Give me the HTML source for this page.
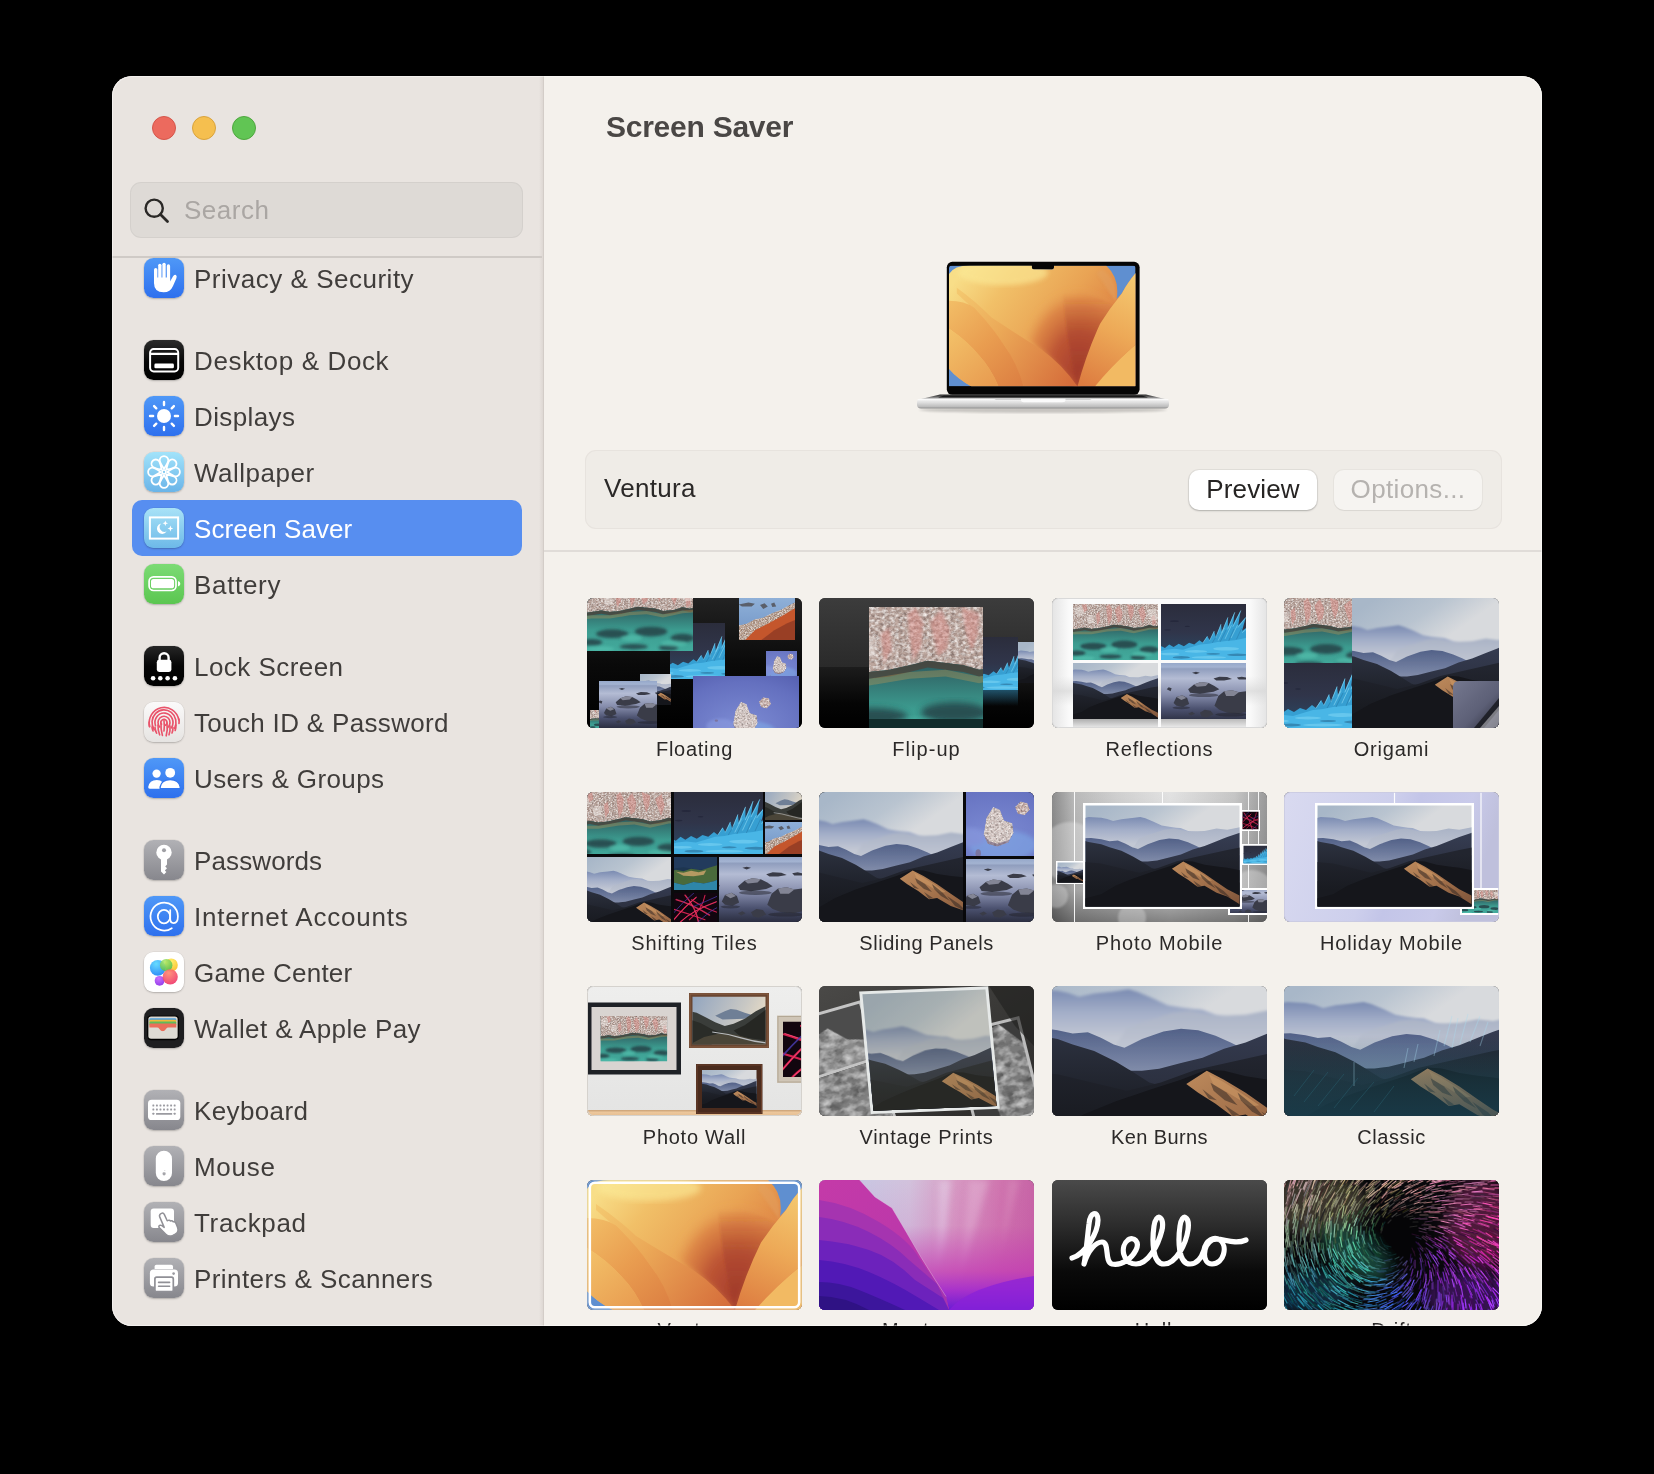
<!DOCTYPE html>
<html>
<head>
<meta charset="utf-8">
<title>Screen Saver</title>
<style>
html,body{margin:0;padding:0;background:#000;}
body{width:1654px;height:1474px;position:relative;overflow:hidden;font-family:"Liberation Sans",sans-serif;-webkit-font-smoothing:antialiased;}
#win{will-change:transform;position:absolute;left:112px;top:76px;width:1430px;height:1250px;border-radius:20px;overflow:hidden;background:#f4f1ec;}
#win:after{content:"";position:absolute;left:0;top:0;right:0;bottom:0;border-radius:20px;box-shadow:inset 0 0 0 1px rgba(255,255,255,.45);pointer-events:none;z-index:50;}
#side{position:absolute;left:0;top:0;width:431px;height:1250px;background:#e9e4e0;}
#vdiv{position:absolute;left:427px;top:0;width:5px;height:1250px;background:linear-gradient(90deg,rgba(210,204,199,0) 0,rgba(210,204,199,.45) 70%,#d3cdc8 80%,#d3cdc8 100%);}
.tl{position:absolute;top:40px;width:24px;height:24px;border-radius:50%;box-sizing:border-box;}
#search{position:absolute;left:18px;top:106px;width:393px;height:56px;border-radius:11px;background:#dedad6;box-shadow:inset 0 0 0 1px rgba(0,0,0,.045);}
#search span{position:absolute;left:54px;top:13px;font-size:26px;line-height:30px;color:#aaa6a3;letter-spacing:.5px;}
#hrule{position:absolute;left:0;top:180px;width:430px;height:2px;background:#cfcac6;}
.row{position:absolute;left:20px;width:390px;height:56px;border-radius:10px;}
.row.sel{background:#578ef0;}
.row .ic{position:absolute;left:12px;top:8px;width:40px;height:40px;border-radius:9.5px;overflow:hidden;box-shadow:0 1px 2px rgba(0,0,0,.22),0 0 0 .5px rgba(0,0,0,.06);}
.row .ic svg{position:absolute;left:0;top:0;width:40px;height:40px;display:block;}
.row .lb{position:absolute;left:62px;top:13px;font-size:26px;line-height:32px;color:#403d3b;white-space:nowrap;letter-spacing:.35px;}
.row.sel .lb{color:#fff;}
#main{position:absolute;left:432px;top:0;width:998px;height:1250px;background:#f4f1ec;}
#title{position:absolute;left:62px;top:33px;font-size:30px;line-height:36px;letter-spacing:-.25px;font-weight:bold;color:#4a4745;white-space:nowrap;}
#panel{position:absolute;left:41px;top:374px;width:917px;height:79px;border-radius:11px;background:#efece7;box-shadow:inset 0 0 0 1px #e7e3de;}
#panel .nm{position:absolute;left:19px;top:22px;font-size:26px;line-height:32px;color:#2b2928;letter-spacing:.3px;}
.btn{position:absolute;top:19.5px;height:40.5px;border-radius:10px;font-size:26px;line-height:39px;text-align:center;white-space:nowrap;}
#b1{left:604px;letter-spacing:.15px;width:128px;background:#fff;color:#262423;box-shadow:0 1px 2px rgba(0,0,0,.22),0 0 0 1px rgba(0,0,0,.05);}
#b2{left:749px;letter-spacing:.35px;width:148px;background:#f6f4f1;color:#b5b2af;box-shadow:0 1px 1px rgba(0,0,0,.06),0 0 0 1px rgba(0,0,0,.03);}
#sep{position:absolute;left:0;top:474px;width:998px;height:2px;background:#e0dcd8;}
.th{position:absolute;width:215px;height:130px;border-radius:6px;overflow:hidden;background:#333;}
.th svg{position:absolute;left:0;top:0;display:block;}
.cap{position:absolute;width:215px;text-align:center;font-size:20px;line-height:24px;color:#2b2928;white-space:nowrap;letter-spacing:.55px;}
</style>
</head>
<body>
<div id="win">
<div id="side">
<div class="tl" style="left:40px;background:#ec6a5e;border:1px solid #d5564b;"></div>
<div class="tl" style="left:80px;background:#f5bf4f;border:1px solid #d9a33d;"></div>
<div class="tl" style="left:120px;background:#61c554;border:1px solid #4fa73f;"></div>
<div id="search"><svg style="position:absolute;left:12px;top:14px" width="30" height="30" viewBox="0 0 30 30"><circle cx="12.2" cy="12.2" r="8.6" fill="none" stroke="#2a2826" stroke-width="2.4"/><path d="M18.5 18.5 L25.5 25.5" stroke="#2a2826" stroke-width="2.8" stroke-linecap="round"/></svg><span>Search</span></div>
<div id="hrule"></div>
<div class="row" style="top:174px"><div class="ic"><svg viewBox="0 0 40 40"><defs><linearGradient id="ib1" x1="0" y1="0" x2="0" y2="1"><stop offset="0" stop-color="#4f98f7"/><stop offset="1" stop-color="#2e70ee"/></linearGradient></defs><rect width="40" height="40" fill="url(#ib1)"/><g fill="#fff"><rect x="10" y="10" width="3.4" height="16" rx="1.7"/><rect x="14.2" y="5.7" width="3.3" height="18" rx="1.65"/><rect x="18.4" y="4.7" width="3.3" height="18" rx="1.65"/><rect x="22.8" y="6.3" width="3.3" height="18" rx="1.65"/><path d="M10 19.5 H26.1 V23.6 L28.9 18.4 Q30.4 16 32 17.1 Q33.3 18.2 32.3 20.4 L29 28 Q26.4 34.3 19.6 34.3 Q10 34.3 10 25Z"/></g></svg></div><div class="lb" style="letter-spacing:0.51px">Privacy &amp; Security</div></div>
<div class="row" style="top:256px"><div class="ic"><svg viewBox="0 0 40 40"><defs><linearGradient id="ib2" x1="0" y1="0" x2="0" y2="1"><stop offset="0" stop-color="#2c2c2c"/><stop offset=".55" stop-color="#060606"/><stop offset="1" stop-color="#000"/></linearGradient></defs><rect width="40" height="40" fill="url(#ib2)"/><rect x="6.1" y="9.1" width="28.1" height="22.3" rx="3.6" fill="none" stroke="#fff" stroke-width="2"/><path d="M6.1 13.9 H34.2" stroke="#fff" stroke-width="2.1"/><rect x="10.4" y="23.6" width="19.5" height="4.7" rx="1.3" fill="#fff"/></svg></div><div class="lb" style="letter-spacing:0.63px">Desktop &amp; Dock</div></div>
<div class="row" style="top:312px"><div class="ic"><svg viewBox="0 0 40 40"><defs><linearGradient id="ib3" x1="0" y1="0" x2="0" y2="1"><stop offset="0" stop-color="#4f98f7"/><stop offset="1" stop-color="#2e70ee"/></linearGradient></defs><rect width="40" height="40" fill="url(#ib3)"/><g fill="#fff"><circle cx="20" cy="20" r="7"/><rect x="18.8" y="4.8" width="2.4" height="5.5" rx="1.2" transform="rotate(0 20 20)"/><rect x="18.8" y="4.8" width="2.4" height="5.5" rx="1.2" transform="rotate(45 20 20)"/><rect x="18.8" y="4.8" width="2.4" height="5.5" rx="1.2" transform="rotate(90 20 20)"/><rect x="18.8" y="4.8" width="2.4" height="5.5" rx="1.2" transform="rotate(135 20 20)"/><rect x="18.8" y="4.8" width="2.4" height="5.5" rx="1.2" transform="rotate(180 20 20)"/><rect x="18.8" y="4.8" width="2.4" height="5.5" rx="1.2" transform="rotate(225 20 20)"/><rect x="18.8" y="4.8" width="2.4" height="5.5" rx="1.2" transform="rotate(270 20 20)"/><rect x="18.8" y="4.8" width="2.4" height="5.5" rx="1.2" transform="rotate(315 20 20)"/></g></svg></div><div class="lb" style="letter-spacing:0.38px">Displays</div></div>
<div class="row" style="top:368px"><div class="ic"><svg viewBox="0 0 40 40"><defs><linearGradient id="ib4" x1="0" y1="0" x2="0" y2="1"><stop offset="0" stop-color="#a2e3fa"/><stop offset="1" stop-color="#6ab4e8"/></linearGradient></defs><rect width="40" height="40" fill="url(#ib4)"/><g fill="none" stroke="#fff" stroke-width="1.8" stroke-linejoin="round"><path d="M20 16.8 C17 12.2 15.7 9.8 15.7 8.4 A4.3 4.3 0 1 1 24.3 8.4 C24.3 9.8 23 12.2 20 16.8Z" transform="rotate(0 20 20)"/><path d="M20 16.8 C17 12.2 15.7 9.8 15.7 8.4 A4.3 4.3 0 1 1 24.3 8.4 C24.3 9.8 23 12.2 20 16.8Z" transform="rotate(45 20 20)"/><path d="M20 16.8 C17 12.2 15.7 9.8 15.7 8.4 A4.3 4.3 0 1 1 24.3 8.4 C24.3 9.8 23 12.2 20 16.8Z" transform="rotate(90 20 20)"/><path d="M20 16.8 C17 12.2 15.7 9.8 15.7 8.4 A4.3 4.3 0 1 1 24.3 8.4 C24.3 9.8 23 12.2 20 16.8Z" transform="rotate(135 20 20)"/><path d="M20 16.8 C17 12.2 15.7 9.8 15.7 8.4 A4.3 4.3 0 1 1 24.3 8.4 C24.3 9.8 23 12.2 20 16.8Z" transform="rotate(180 20 20)"/><path d="M20 16.8 C17 12.2 15.7 9.8 15.7 8.4 A4.3 4.3 0 1 1 24.3 8.4 C24.3 9.8 23 12.2 20 16.8Z" transform="rotate(225 20 20)"/><path d="M20 16.8 C17 12.2 15.7 9.8 15.7 8.4 A4.3 4.3 0 1 1 24.3 8.4 C24.3 9.8 23 12.2 20 16.8Z" transform="rotate(270 20 20)"/><path d="M20 16.8 C17 12.2 15.7 9.8 15.7 8.4 A4.3 4.3 0 1 1 24.3 8.4 C24.3 9.8 23 12.2 20 16.8Z" transform="rotate(315 20 20)"/></g><circle cx="20" cy="20" r="1.9" fill="none" stroke="#fff" stroke-width="1.5"/></svg></div><div class="lb" style="letter-spacing:0.50px">Wallpaper</div></div>
<div class="row sel" style="top:424px"><div class="ic"><svg viewBox="0 0 40 40"><defs><linearGradient id="ib5" x1="0" y1="0" x2="0" y2="1"><stop offset="0" stop-color="#a8e2f7"/><stop offset="1" stop-color="#6db9e8"/></linearGradient></defs><rect width="40" height="40" fill="url(#ib5)"/><rect x="5.9" y="9.4" width="28.2" height="21.2" fill="none" stroke="#fff" stroke-width="2"/><path d="M17.2 15.4 A5.3 5.3 0 1 0 22.6 23.6 A5 5 0 0 1 17.2 15.4Z" fill="#fff"/><path d="M21.3 12.6 l.75 2 2 .75 -2 .75 -.75 2 -.75 -2 -2 -.75 2 -.75Z M26.4 17.6 l.8 2.1 2.1 .8 -2.1 .8 -.8 2.1 -.8 -2.1 -2.1 -.8 2.1 -.8Z" fill="#fff"/></svg></div><div class="lb" style="letter-spacing:0.06px">Screen Saver</div></div>
<div class="row" style="top:480px"><div class="ic"><svg viewBox="0 0 40 40"><defs><linearGradient id="ib6" x1="0" y1="0" x2="0" y2="1"><stop offset="0" stop-color="#7cdb75"/><stop offset="1" stop-color="#5bc650"/></linearGradient></defs><rect width="40" height="40" fill="url(#ib6)"/><rect x="5.1" y="12.9" width="26.9" height="13.6" rx="4.4" fill="none" stroke="#fff" stroke-width="1.7"/><rect x="7" y="15.1" width="23.1" height="9.2" rx="2.6" fill="#fff"/><path d="M34 16.9 Q36.3 17.6 36.3 19.7 Q36.3 21.8 34 22.5Z" fill="#fff"/></svg></div><div class="lb" style="letter-spacing:0.68px">Battery</div></div>
<div class="row" style="top:562px"><div class="ic"><svg viewBox="0 0 40 40"><defs><linearGradient id="ib7" x1="0" y1="0" x2="0" y2="1"><stop offset="0" stop-color="#262626"/><stop offset=".5" stop-color="#050505"/><stop offset="1" stop-color="#000"/></linearGradient></defs><rect width="40" height="40" fill="url(#ib7)"/><path d="M15.6 15.5 V11.7 A4.5 4.5 0 0 1 24.6 11.7 V15.5" fill="none" stroke="#fff" stroke-width="2.4"/><rect x="12.8" y="13.8" width="14.6" height="12.2" rx="2.4" fill="#fff"/><g fill="#fff"><circle cx="9.1" cy="32.2" r="2.3"/><circle cx="16.3" cy="32.2" r="2.3"/><circle cx="23.6" cy="32.2" r="2.3"/><circle cx="30.9" cy="32.2" r="2.3"/></g></svg></div><div class="lb" style="letter-spacing:0.45px">Lock Screen</div></div>
<div class="row" style="top:618px"><div class="ic"><svg viewBox="0 0 40 40"><defs><linearGradient id="ib8" x1="0" y1="0" x2="0" y2="1"><stop offset="0" stop-color="#fbfafa"/><stop offset="1" stop-color="#e6e4e2"/></linearGradient></defs><rect width="40" height="40" fill="url(#ib8)"/><g fill="none" stroke="#e9536a" stroke-width="1.65" stroke-linecap="round"><path d="M17.5 22.3 A3 3.2 0 1 1 21.5 23.2"/><path d="M15.8 25.0 A6 6.3 0 1 1 23.9 25.3"/><path d="M11.5 23.7 A9 9.5 0 1 1 27.4 25.9"/><path d="M10.2 27.7 A12 12.6 0 1 1 30.6 26.4"/><path d="M5.5 24.6 A15 15.8 0 1 1 34.8 17.8"/><path d="M20 18.5 Q20.6 24 20 29"/><path d="M17 21.5 Q16.6 27 18.4 33.4"/><path d="M23 21.6 Q23.8 28 22.2 33.8"/><path d="M14 23 Q13.8 28.6 15.6 32.8"/><path d="M26 24 Q26.4 29.4 25 32.8"/><path d="M11 25.4 Q11.2 28.6 12.6 31.2"/><path d="M29 25.6 Q29 28.8 28 31"/><path d="M8 25 Q8.2 27.4 9 29"/><path d="M32 23 Q32 26 31.2 28.4"/><path d="M5.2 20 Q5 22.6 5.6 24.4"/><path d="M34.9 17 Q35.4 19.4 35 21.4"/></g></svg></div><div class="lb" style="letter-spacing:0.33px">Touch ID &amp; Password</div></div>
<div class="row" style="top:674px"><div class="ic"><svg viewBox="0 0 40 40"><defs><linearGradient id="ib9" x1="0" y1="0" x2="0" y2="1"><stop offset="0" stop-color="#4f98f7"/><stop offset="1" stop-color="#2e70ee"/></linearGradient></defs><rect width="40" height="40" fill="url(#ib9)"/><g fill="#fff"><circle cx="12.6" cy="15.6" r="4.15"/><path d="M4.2 29 Q5.4 22 12.8 22 Q16.6 22 18.6 24.2 Q16.2 26.6 15.6 30.7 H5.8 Q4 30.7 4.2 29Z"/><circle cx="26.2" cy="14.8" r="4.9"/><path d="M16.1 29 Q17.6 21.7 26.2 21.7 Q34.8 21.7 36.3 29 Q36.5 30.7 34.8 30.7 H17.6 Q15.9 30.7 16.1 29Z" stroke="#3377ef" stroke-width="1.3"/></g></svg></div><div class="lb" style="letter-spacing:0.39px">Users &amp; Groups</div></div>
<div class="row" style="top:756px"><div class="ic"><svg viewBox="0 0 40 40"><defs><linearGradient id="ib10" x1="0" y1="0" x2="0" y2="1"><stop offset="0" stop-color="#b1b1b5"/><stop offset="1" stop-color="#87878d"/></linearGradient></defs><rect width="40" height="40" fill="url(#ib10)"/><g fill="#fff"><circle cx="20" cy="12.4" r="7.7"/><path d="M17 18 H23 V24.6 L21.2 26.4 L23 28.2 L20.8 30.4 L22.4 32 L20 34.6 L17 31.6Z"/></g><circle cx="20" cy="10.2" r="2" fill="#a0a0a5"/></svg></div><div class="lb" style="letter-spacing:0.12px">Passwords</div></div>
<div class="row" style="top:812px"><div class="ic"><svg viewBox="0 0 40 40"><defs><linearGradient id="ib11" x1="0" y1="0" x2="0" y2="1"><stop offset="0" stop-color="#4f98f7"/><stop offset="1" stop-color="#2e70ee"/></linearGradient></defs><rect width="40" height="40" fill="url(#ib11)"/><g fill="none" stroke="#fff" stroke-width="1.75" stroke-linecap="round"><ellipse cx="20" cy="20.6" rx="6.2" ry="6.8"/><path d="M27.8 32.2 A13.7 14 0 1 1 33.9 20.2 C33.9 24.8 31.8 27 29.6 27 C27.4 27 26.2 25.4 26.2 23 V14"/></g></svg></div><div class="lb" style="letter-spacing:0.81px">Internet Accounts</div></div>
<div class="row" style="top:868px"><div class="ic"><svg viewBox="0 0 40 40"><rect width="40" height="40" fill="#fff"/><defs><radialGradient id="gc1" cx=".4" cy=".25" r=".85"><stop offset="0" stop-color="#66dcff"/><stop offset="1" stop-color="#2a86f6"/></radialGradient><radialGradient id="gc2" cx=".4" cy=".25" r=".85"><stop offset="0" stop-color="#ff8a70"/><stop offset="1" stop-color="#ee2f6a"/></radialGradient><radialGradient id="gc3" cx=".5" cy=".25" r=".85"><stop offset="0" stop-color="#fff06a"/><stop offset="1" stop-color="#f9b82a"/></radialGradient><radialGradient id="gc4" cx=".4" cy=".25" r=".85"><stop offset="0" stop-color="#b4ea6a"/><stop offset="1" stop-color="#46b84e"/></radialGradient><radialGradient id="gc5" cx=".4" cy=".25" r=".85"><stop offset="0" stop-color="#c86afc"/><stop offset="1" stop-color="#8a2ee8"/></radialGradient></defs><circle cx="27.2" cy="13" r="6.6" fill="url(#gc3)"/><circle cx="13.8" cy="15.8" r="7.9" fill="url(#gc1)"/><circle cx="22.2" cy="13.2" r="6.2" fill="url(#gc4)" opacity=".9"/><circle cx="15.6" cy="28.8" r="4.9" fill="url(#gc5)" opacity=".95"/><circle cx="26.2" cy="24.8" r="7.6" fill="url(#gc2)" opacity=".92"/></svg></div><div class="lb" style="letter-spacing:0.21px">Game Center</div></div>
<div class="row" style="top:924px"><div class="ic"><svg viewBox="0 0 40 40"><rect width="40" height="40" fill="#1e1e20"/><rect x="3.7" y="7.8" width="30.6" height="23.7" rx="3.4" fill="#dcd9d2"/><rect x="5.4" y="10.2" width="26.9" height="4" rx="1.4" fill="#4a9ee0"/><rect x="5.4" y="11.8" width="26.9" height="4" rx="1.2" fill="#f0b93a"/><rect x="5.4" y="13.6" width="26.9" height="4" rx="1.2" fill="#5fbb5a"/><rect x="5.4" y="15.5" width="26.9" height="8" rx="1.2" fill="#ea6e5a"/><path d="M3.7 19.6 H13 Q14.6 19.6 15.4 21 Q17 23.2 18.7 23.2 Q20.4 23.2 22 21 Q22.8 19.6 24.4 19.6 H34.3 V28.1 Q34.3 31.5 30.9 31.5 H7.1 Q3.7 31.5 3.7 28.1Z" fill="#dedbd4"/><rect x="3.7" y="7.8" width="30.6" height="23.7" rx="3.4" fill="none" stroke="#000" stroke-width="1.3"/></svg></div><div class="lb" style="letter-spacing:0.38px">Wallet &amp; Apple Pay</div></div>
<div class="row" style="top:1006px"><div class="ic"><svg viewBox="0 0 40 40"><defs><linearGradient id="ib14" x1="0" y1="0" x2="0" y2="1"><stop offset="0" stop-color="#b1b1b5"/><stop offset="1" stop-color="#87878d"/></linearGradient></defs><rect width="40" height="40" fill="url(#ib14)"/><rect x="4" y="9.8" width="32.3" height="20.2" rx="3.6" fill="#fff"/><rect x="8.40" y="14.6" width="1.9" height="1.9" rx=".4" fill="#9a9aa0"/><rect x="11.95" y="14.6" width="1.9" height="1.9" rx=".4" fill="#9a9aa0"/><rect x="15.50" y="14.6" width="1.9" height="1.9" rx=".4" fill="#9a9aa0"/><rect x="19.05" y="14.6" width="1.9" height="1.9" rx=".4" fill="#9a9aa0"/><rect x="22.60" y="14.6" width="1.9" height="1.9" rx=".4" fill="#9a9aa0"/><rect x="26.15" y="14.6" width="1.9" height="1.9" rx=".4" fill="#9a9aa0"/><rect x="29.70" y="14.6" width="1.9" height="1.9" rx=".4" fill="#9a9aa0"/><rect x="8.40" y="18.5" width="1.9" height="1.9" rx=".4" fill="#9a9aa0"/><rect x="11.95" y="18.5" width="1.9" height="1.9" rx=".4" fill="#9a9aa0"/><rect x="15.50" y="18.5" width="1.9" height="1.9" rx=".4" fill="#9a9aa0"/><rect x="19.05" y="18.5" width="1.9" height="1.9" rx=".4" fill="#9a9aa0"/><rect x="22.60" y="18.5" width="1.9" height="1.9" rx=".4" fill="#9a9aa0"/><rect x="26.15" y="18.5" width="1.9" height="1.9" rx=".4" fill="#9a9aa0"/><rect x="29.70" y="18.5" width="1.9" height="1.9" rx=".4" fill="#9a9aa0"/><rect x="8.4" y="22.8" width="1.9" height="1.9" rx=".4" fill="#9a9aa0"/><rect x="12" y="22.9" width="16.2" height="1.8" rx=".5" fill="#9a9aa0"/><rect x="29.7" y="22.8" width="1.9" height="1.9" rx=".4" fill="#9a9aa0"/></svg></div><div class="lb" style="letter-spacing:0.38px">Keyboard</div></div>
<div class="row" style="top:1062px"><div class="ic"><svg viewBox="0 0 40 40"><defs><linearGradient id="ib15" x1="0" y1="0" x2="0" y2="1"><stop offset="0" stop-color="#b1b1b5"/><stop offset="1" stop-color="#87878d"/></linearGradient></defs><rect width="40" height="40" fill="url(#ib15)"/><rect x="11.8" y="4.7" width="16.2" height="30.3" rx="8.1" fill="#fff"/><path d="M20.1 26.4 q1.5 -.3 1.6 1.2 q0 1.8 -1.6 2 q-1.6 -.2 -1.6 -2 q.1 -1.5 1.6 -1.2Z M20.4 25 q.8 -.2 .9 -1 q-.8 .1 -.9 1Z" fill="#a5a5aa"/></svg></div><div class="lb" style="letter-spacing:0.70px">Mouse</div></div>
<div class="row" style="top:1118px"><div class="ic"><svg viewBox="0 0 40 40"><defs><linearGradient id="ib16" x1="0" y1="0" x2="0" y2="1"><stop offset="0" stop-color="#b1b1b5"/><stop offset="1" stop-color="#87878d"/></linearGradient></defs><rect width="40" height="40" fill="url(#ib16)"/><rect x="6.7" y="6.5" width="23.3" height="19.5" rx="3" fill="#fff"/><path d="M17.4 11.4 Q19.4 10.4 20.4 12.6 L23.2 18.8 L24.2 18.4 Q25.6 17.8 26.6 19 Q28.2 18.4 29.2 19.8 Q31.2 19.4 32 21.4 L33.6 25.4 Q35.2 29.8 31.2 32.2 L28.8 33.4 Q24.8 35.2 21.8 32.2 L15.4 25.8 Q14.2 24.4 15.6 23.4 Q16.8 22.8 18 23.6 L20.2 25.4 L15.6 14.6 Q15 12.4 17.4 11.4Z" fill="#fff" stroke="#909096" stroke-width="1.5" stroke-linejoin="round"/></svg></div><div class="lb" style="letter-spacing:0.66px">Trackpad</div></div>
<div class="row" style="top:1174px"><div class="ic"><svg viewBox="0 0 40 40"><defs><linearGradient id="ib17" x1="0" y1="0" x2="0" y2="1"><stop offset="0" stop-color="#b1b1b5"/><stop offset="1" stop-color="#87878d"/></linearGradient></defs><rect width="40" height="40" fill="url(#ib17)"/><path d="M10.6 11 V8.4 Q10.6 6.7 12.4 6.7 H27.2 Q29 6.7 29 8.4 V11Z" fill="#fff"/><rect x="5.9" y="11.6" width="28.1" height="17" rx="3.6" fill="#fff"/><circle cx="29.6" cy="15.6" r="1.3" fill="#9a9aa0"/><rect x="10.9" y="19.2" width="18.4" height="14.5" rx="1.8" fill="#fff" stroke="#909096" stroke-width="1.7"/><path d="M14.6 24.4 H25.6 M14.6 28.2 H25.6" stroke="#909096" stroke-width="1.6" stroke-linecap="round"/></svg></div><div class="lb" style="letter-spacing:0.42px">Printers &amp; Scanners</div></div>
</div>
<div id="vdiv"></div>
<div id="main">
<div id="title">Screen Saver</div>
<svg style="position:absolute;left:360px;top:170px" width="280" height="190" viewBox="0 0 280 190">
<defs>
<linearGradient id="gLb" x1="0" y1="0" x2="0" y2="1"><stop offset="0" stop-color="#f4f4f4"/><stop offset=".35" stop-color="#e2e2e2"/><stop offset=".8" stop-color="#bdbdbd"/><stop offset="1" stop-color="#8e8e8e"/></linearGradient>
<linearGradient id="gLd" x1="0" y1="0" x2="0" y2="1"><stop offset="0" stop-color="#2a2a2a"/><stop offset=".5" stop-color="#6a6a6a"/><stop offset="1" stop-color="#dcdcdc"/></linearGradient>
<clipPath id="cScr"><path d="M48 19.5 H127.8 V21.4 Q127.8 23.4 129.8 23.4 H148 Q150 23.4 150 21.4 V19.5 H228.7 Q231.7 19.5 231.7 22.5 V140.5 H45 V22.5 Q45 19.5 48 19.5Z"/></clipPath>
</defs>
<ellipse cx="139" cy="164" rx="124" ry="3" fill="#000" opacity=".18" filter="url(#fBlur1)"/>
<rect x="42.8" y="15.8" width="192.8" height="133" rx="5.5" fill="#050505"/>
<g clip-path="url(#cScr)"><svg x="45" y="19.5" width="186.7" height="121" viewBox="0 0 215 130" preserveAspectRatio="none"><use href="#s-ventura"/></svg></g>
<path d="M36 148.6 H242 L262 153.2 H16Z" fill="url(#gLd)"/>
<path d="M40 149.6 H238 L244 151.6 H34Z" fill="#1a1a1a"/>
<rect x="13" y="152.7" width="252" height="9.8" rx="4" fill="url(#gLb)"/>
<rect x="13.5" y="153.2" width="251" height="1" rx=".5" fill="#fff" opacity=".8"/>
<path d="M117 152.7 H161.5 V154 Q161.5 156.2 158.5 156.2 H120 Q117 156.2 117 154Z" fill="#fbfbfb"/>
<path d="M90 152.7 H117 V154 H92Z M161.5 152.7 H188 L186 154 H161.5Z" fill="#d2d2d2"/>
</svg>
<div id="panel"><div class="nm">Ventura</div><div class="btn" id="b1">Preview</div><div class="btn" id="b2">Options...</div></div>
<div id="sep"></div>
<svg width="0" height="0" style="position:absolute">
<defs>
<filter id="fRock" x="0" y="0" width="100%" height="100%"><feTurbulence type="fractalNoise" baseFrequency="0.28 0.34" numOctaves="3" seed="4" result="n"/><feColorMatrix in="n" type="matrix" values="0 0 0 0 0  0 0 0 0 0  0 0 0 0 0  1.5 0 0 0 -0.56" result="a"/><feFlood flood-color="#5e4c4a"/><feComposite in2="a" operator="in" result="d"/><feColorMatrix in="n" type="matrix" values="0 0 0 0 1  0 0 0 0 .97  0 0 0 0 .95  0 1.7 0 0 -0.72" result="l"/><feMerge><feMergeNode in="SourceGraphic"/><feMergeNode in="d"/><feMergeNode in="l"/></feMerge><feComposite in2="SourceGraphic" operator="in"/></filter>
<filter id="fRockSoft" x="0" y="0" width="100%" height="100%"><feTurbulence type="fractalNoise" baseFrequency="0.09 0.13" numOctaves="3" seed="11" result="n"/><feColorMatrix in="n" type="matrix" values="0 0 0 0 0  0 0 0 0 0  0 0 0 0 0  1.3 0 0 0 -0.48" result="a"/><feFlood flood-color="#2e2e2e"/><feComposite in2="a" operator="in" result="d"/><feColorMatrix in="n" type="matrix" values="0 0 0 0 .9  0 0 0 0 .9  0 0 0 0 .9  0 1.2 0 0 -0.5" result="l"/><feMerge><feMergeNode in="SourceGraphic"/><feMergeNode in="d"/><feMergeNode in="l"/></feMerge><feComposite in2="SourceGraphic" operator="in"/></filter>
<filter id="fBlur1"><feGaussianBlur stdDeviation="1.2"/></filter>
<filter id="fBlur3"><feGaussianBlur stdDeviation="3"/></filter>
<filter id="fBlur6"><feGaussianBlur stdDeviation="6"/></filter>
<filter id="fBlurM" x="-5%" y="-20%" width="110%" height="140%"><feGaussianBlur stdDeviation="0.9"/></filter>
<filter id="fBlurS" x="-5%" y="-20%" width="110%" height="140%"><feGaussianBlur stdDeviation="0.5"/></filter>
<linearGradient id="gSky" gradientUnits="userSpaceOnUse" x1="70" y1="-14" x2="112" y2="46"><stop offset="0" stop-color="#a8b7c8"/><stop offset=".55" stop-color="#b9c4d0"/><stop offset="1" stop-color="#d8dadd"/></linearGradient>
<linearGradient id="gR1" gradientUnits="userSpaceOnUse" x1="0" y1="26" x2="0" y2="58"><stop offset="0" stop-color="#7788b0"/><stop offset=".5" stop-color="#a3aec8"/><stop offset="1" stop-color="#c3c8d4"/></linearGradient>
<linearGradient id="gR2" gradientUnits="userSpaceOnUse" x1="0" y1="40" x2="0" y2="66"><stop offset="0" stop-color="#aab3c6"/><stop offset="1" stop-color="#c2c7d3"/></linearGradient>
<linearGradient id="gR3" gradientUnits="userSpaceOnUse" x1="0" y1="50" x2="0" y2="82"><stop offset="0" stop-color="#4f5e85"/><stop offset=".6" stop-color="#6f7c9e"/><stop offset="1" stop-color="#8792ad"/></linearGradient>
<linearGradient id="gR4" gradientUnits="userSpaceOnUse" x1="0" y1="45" x2="0" y2="95"><stop offset="0" stop-color="#363d53"/><stop offset="1" stop-color="#2a2e3c"/></linearGradient>
<linearGradient id="gR5" gradientUnits="userSpaceOnUse" x1="0" y1="55" x2="0" y2="100"><stop offset="0" stop-color="#2d3240"/><stop offset="1" stop-color="#1c1f27"/></linearGradient>
<linearGradient id="gR6" gradientUnits="userSpaceOnUse" x1="0" y1="70" x2="0" y2="110"><stop offset="0" stop-color="#22252f"/><stop offset="1" stop-color="#191b21"/></linearGradient>
<linearGradient id="gOr" x1="0" y1="0" x2="1" y2="1"><stop offset="0" stop-color="#bd8a5c"/><stop offset=".5" stop-color="#9c6b47"/><stop offset="1" stop-color="#6f4a35"/></linearGradient>
<g id="s-mtn">
<rect x="-10" y="-60" width="230" height="200" fill="url(#gSky)"/>
<g filter="url(#fBlurM)">
<path d="M-0.8 31.2 L13.6 27.3 L28.0 28.2 L34.8 29.6 L41.5 32.0 L51.0 29.9 L63.3 28.6 L72.6 27.3 L78.4 28.9 L87.8 32.8 L97.1 37.2 L105.8 38.7 L113.5 39.6 L118.7 39.9 L127.4 43.3 L135.3 44.2 L157.6 46.8 L200.8 46.8 L220 62 L-10 62Z" fill="url(#gR1)"/>
<path d="M71.2 52.0 L81.3 48.1 L100.0 42.0 L110.8 40.6 L127.4 44.1 L146.1 43.3 L159.8 40.6 L172.0 42.0 L186.4 39.0 L200.8 40.3 L220 70 L60 70Z" fill="url(#gR2)"/>
</g>
<g filter="url(#fBlurS)">
<path d="M-0.8 52.0 L16.5 51.4 L28.0 52.9 L37.5 55.0 L47.0 54.3 L55.2 57.7 L63.3 61.9 L70.0 64.0 L81.0 58.5 L94.5 53.7 L105.5 52.0 L116.3 52.9 L127.2 56.4 L136.7 60.6 L150.4 67.6 L200.8 72.8 L220 100 L-10 100Z" fill="url(#gR3)"/>
</g>
<path d="M-0.8 104.0 L56.8 85.8 L74.1 78.4 L81.0 78.4 L91.8 77.1 L105.5 73.6 L119.0 70.2 L132.5 64.6 L146.1 60.6 L159.8 55.0 L172.0 50.2 L186.4 45.5 L200.8 40.3 L220 140 L-10 140Z" fill="url(#gR4)"/>
<path d="M-0.8 52.0 L13.6 55.9 L28.0 58.5 L37.5 61.9 L51.0 66.0 L64.7 72.8 L74.1 78.4 L85.6 85.8 L114.4 93.6 L200.8 104.0 L220 140 L-10 140Z" fill="url(#gR5)"/>
<path d="M-0.8 78.0 L28.0 80.6 L49.6 85.8 L71.2 91.0 L92.8 85.8 L114.4 78.0 L143.2 71.5 L172.0 65.0 L200.8 59.8 L220 140 L-10 140Z" fill="url(#gR6)"/>
<path d="M-0.8 123.5 L28.0 115.6 L44.3 105.9 L64.7 97.6 L85.0 90.7 L105.5 84.0 L121.7 77.7 L132.5 78.4 L146.1 81.9 L159.8 84.0 L172.0 85.3 L200.8 91.0 L220 140 L-10 140Z" fill="#15161b"/>
<path d="M108.8 86.7 L121.7 78.4 L132.5 84.0 L146.1 92.2 L159.8 101.8 L172.0 110.1 L200.8 124.8 L200.8 136.5 L172.0 118.3 L159.8 114.1 L146.1 105.9 L138.0 107.2 L127.2 99.1 L116.3 92.2Z" fill="url(#gOr)"/>
<path d="M123.0 80.6 L131.7 85.2 L143.2 92.3 L154.7 100.1 L149.0 100.8 L137.4 93.6 L125.9 87.1Z" fill="#cf9a66" opacity=".55"/>
<g fill="#2a2220" opacity=".5"><path d="M124 86 L134 92 L141 100 L133 97 L126 91Z"/><path d="M141 92 L152 101 L159 109 L150 104 L143 97Z"/><path d="M119 90 L128 97 L123 96Z"/><path d="M156 104 L168 112 L176 120 L164 114Z"/><path d="M133 100 L142 106 L138 107Z"/></g>
</g>
<linearGradient id="gSea" x1="0" y1="0" x2="0" y2="1"><stop offset="0" stop-color="#33434a"/><stop offset=".35" stop-color="#2d555a"/><stop offset=".7" stop-color="#3c9b8f"/><stop offset="1" stop-color="#43ab9d"/></linearGradient>
<g id="s-coast">
<rect width="215" height="130" fill="url(#gSea)"/>
<g filter="url(#fBlur3)" fill="#27464c" opacity=".9"><ellipse cx="56" cy="98" rx="30" ry="8"/><ellipse cx="128" cy="94" rx="30" ry="9"/><ellipse cx="186" cy="106" rx="22" ry="8"/><ellipse cx="18" cy="114" rx="20" ry="6"/><ellipse cx="96" cy="122" rx="26" ry="5"/><ellipse cx="160" cy="124" rx="18" ry="5"/></g>
<g filter="url(#fBlur3)" fill="#5ccab6" opacity=".5"><ellipse cx="92" cy="106" rx="20" ry="6"/><ellipse cx="170" cy="116" rx="24" ry="6"/><ellipse cx="34" cy="126" rx="26" ry="5"/></g>
<path filter="url(#fRock)" d="M0 0 H215 V48 L200 52 L186 49 L170 54 L150 56 L136 52 L120 50 L104 48 L88 52 L70 56 L52 58 L36 55 L18 58 L0 60Z" fill="#bca69d"/>
<g filter="url(#fBlur1)" fill="#d98c86" opacity=".5"><path d="M86 6 L93 0 L100 14 L98 36 L91 48 L88 28Z"/><path d="M106 14 L116 2 L124 20 L121 38 L113 44 L110 30Z"/><path d="M134 0 L150 6 L149 24 L143 40 L138 22Z"/><path d="M160 14 L172 4 L178 26 L171 46 L165 30Z"/><path d="M62 24 L70 18 L72 38 L65 50Z"/><path d="M30 2 L40 0 L42 14 L34 20Z"/><path d="M190 30 L198 24 L202 44 L194 50Z"/></g>
<g filter="url(#fBlur1)" fill="#ece6e2" opacity=".5"><path d="M10 10 L30 6 L36 22 L20 30Z"/><path d="M40 30 L56 26 L58 44 L44 46Z"/><path d="M180 14 L200 10 L206 34 L190 40Z"/></g>
<path d="M0 60 L18 58 L36 55 L52 58 L70 56 L88 52 L104 48 L120 50 L136 52 L150 56 L170 54 L186 49 L200 52 L215 48 V54 L200 58 L186 55 L170 60 L150 62 L136 58 L120 56 L104 54 L88 58 L70 62 L52 64 L36 61 L18 64 L0 66Z" fill="#4e4238" opacity=".75"/>
<path d="M0 66 L18 64 L52 64 L88 58 L120 56 L150 62 L186 55 L215 54 V58 L186 60 L150 68 L120 62 L88 64 L52 70 L18 70 L0 72Z" fill="#c79a52" opacity=".35"/>
</g>
<linearGradient id="gNavy" x1="0" y1="0" x2="0" y2="1"><stop offset="0" stop-color="#2b2d3c"/><stop offset=".5" stop-color="#30354a"/><stop offset="1" stop-color="#2a4a66"/></linearGradient>
<g id="s-grass">
<rect width="215" height="130" fill="url(#gNavy)"/>
<g fill="#23263a" opacity=".8"><ellipse cx="40" cy="40" rx="10" ry="2"/><ellipse cx="70" cy="52" rx="6" ry="1.5"/><ellipse cx="24" cy="60" rx="8" ry="1.6"/></g>
<path d="M0 130 L0 102 L10 98 L18 102 L28 94 L38 100 L50 92 L62 98 L74 90 L86 94 L98 84 L106 90 L116 74 L122 84 L132 62 L136 76 L148 46 L150 64 L164 30 L164 54 L180 18 L176 48 L194 14 L188 50 L206 30 L197 62 L215 50 L215 130Z" fill="#369fd2"/>
<path d="M0 130 L0 112 L20 106 L40 104 L60 106 L80 100 L100 94 L120 92 L140 88 L160 86 L180 84 L200 80 L215 76 L215 130Z" fill="#49b6e6"/>
<g stroke="#9be2f8" stroke-width="1.3" fill="none" opacity=".85" stroke-linecap="round"><path d="M122 84 L132 64"/><path d="M136 78 L148 48"/><path d="M150 66 L164 32"/><path d="M164 58 L180 20"/><path d="M176 52 L194 16"/><path d="M188 54 L205 32"/><path d="M106 90 L116 76"/><path d="M198 66 L214 52"/><path d="M142 84 L156 56"/><path d="M158 80 L172 50"/><path d="M172 78 L186 50"/></g>
<g stroke="#1f5f8c" stroke-width="1.2" fill="none" opacity=".6"><path d="M128 90 L140 70"/><path d="M146 88 L160 60"/><path d="M166 86 L178 58"/><path d="M184 82 L196 56"/></g>
<g fill="#7fd6f4" opacity=".55"><ellipse cx="30" cy="116" rx="22" ry="3"/><ellipse cx="90" cy="110" rx="26" ry="3"/><ellipse cx="160" cy="104" rx="30" ry="4"/><ellipse cx="120" cy="124" rx="40" ry="3"/></g>
<g fill="#225c84" opacity=".5"><ellipse cx="56" cy="124" rx="20" ry="3"/><ellipse cx="186" cy="118" rx="24" ry="3"/><ellipse cx="130" cy="116" rx="16" ry="2"/></g>
</g>
<linearGradient id="gMist" x1="0" y1="0" x2="0" y2="1"><stop offset="0" stop-color="#869bc2"/><stop offset=".14" stop-color="#a3b3d1"/><stop offset=".17" stop-color="#909ebe"/><stop offset=".32" stop-color="#b4bcd4"/><stop offset=".58" stop-color="#858cab"/><stop offset=".8" stop-color="#4c5270"/><stop offset="1" stop-color="#2b2e40"/></linearGradient>
<g id="s-rocks">
<rect width="215" height="130" fill="url(#gMist)"/>
<g fill="#3a3c48"><path d="M96 64 L108 54 L122 49 L138 51 L150 57 L160 64 L148 69 L120 73 L100 71Z"/><path d="M150 98 L158 78 L170 68 L186 66 L200 70 L215 68 V110 L200 114 L176 112 L160 106Z"/><path d="M66 92 L72 80 L84 76 L94 82 L98 94 L86 100 L72 98Z"/><path d="M148 42 L160 38 L176 39 L186 43 L170 46 L154 46Z"/><path d="M104 30 L112 28 L120 30 L112 33Z"/><path d="M120 112 L130 106 L142 108 L148 116 L134 122 L124 120Z"/><path d="M96 114 L104 110 L110 114 L102 118Z"/><path d="M196 40 L206 38 L215 40 V44 L200 44Z"/><path d="M52 64 L56 60 L62 62 L60 68Z"/></g>
<g fill="#8c8e9e" opacity=".9"><path d="M108 54 L122 49 L138 51 L132 57 L114 59Z"/><path d="M170 68 L186 66 L200 70 L190 78 L174 78Z"/><path d="M72 80 L84 76 L92 82 L82 86Z"/></g>
<g filter="url(#fBlur1)" fill="#20222c" opacity=".5"><ellipse cx="128" cy="76" rx="30" ry="4"/><ellipse cx="184" cy="116" rx="32" ry="4"/><ellipse cx="82" cy="102" rx="18" ry="3"/></g>
</g>
<radialGradient id="gPurp" cx=".5" cy=".6" r=".8"><stop offset="0" stop-color="#7d8cd4"/><stop offset=".6" stop-color="#6470bf"/><stop offset="1" stop-color="#4c55a6"/></radialGradient>
<g id="s-purple">
<rect x="-20" y="-20" width="255" height="170" fill="url(#gPurp)"/>
<g filter="url(#fBlur3)" opacity=".6"><ellipse cx="120" cy="92" rx="50" ry="22" fill="#7fa8e6"/><ellipse cx="70" cy="80" rx="26" ry="14" fill="#8a9be0"/></g>
<path filter="url(#fRock)" d="M92 76 L96 52 L106 36 L116 40 L122 56 L134 60 L136 74 L128 88 L112 94 L98 90Z" fill="#d6c8c4"/>
<path filter="url(#fRock)" d="M138 36 L146 28 L156 30 L160 40 L152 48 L142 46Z" fill="#c7aba6"/>
<path d="M92 76 L98 90 L112 94 L128 88 L136 74 L130 84 L112 90 L100 86Z" fill="#6a5a78" opacity=".6"/>
<g fill="#7a6a8a" opacity=".7"><ellipse cx="84" cy="104" rx="4" ry="6"/><ellipse cx="62" cy="70" rx="3" ry="2"/></g>
</g>
<linearGradient id="gRcSea" x1="0" y1="0" x2="0" y2="1"><stop offset="0" stop-color="#8fb0d8"/><stop offset="1" stop-color="#6f93c4"/></linearGradient>
<g id="s-redcoast">
<rect width="215" height="130" fill="url(#gRcSea)"/>
<path d="M20 20 L50 14 L70 18 L60 26 L30 26Z M86 22 L100 16 L110 26 L96 34Z M120 18 L130 14 L136 26 L124 28Z" fill="#5a5f6a"/>
<path filter="url(#fRock)" d="M0 130 L0 96 L20 84 L44 80 L70 66 L96 60 L120 48 L150 36 L180 20 L215 4 V130Z" fill="#b89c8a"/>
<path d="M40 130 L70 100 L110 80 L150 58 L190 34 L215 22 V130Z" fill="#c4562c"/>
<path d="M90 130 L130 100 L170 78 L215 60 V130Z" fill="#8e3a24" opacity=".8"/>
</g>

<linearGradient id="gRoadSky" x1="0" y1="0" x2="1" y2=".3"><stop offset="0" stop-color="#8fa3bf"/><stop offset=".7" stop-color="#c9c8c4"/><stop offset="1" stop-color="#e8dcc6"/></linearGradient>
<g id="s-road">
<rect width="215" height="130" fill="url(#gRoadSky)"/>
<path d="M70 52 L96 40 L112 34 L128 36 L150 44 L170 50 L150 60 L90 62Z" fill="#6f7f96"/>
<path d="M0 40 L20 44 L44 56 L70 70 L96 80 L120 74 L150 60 L180 40 L215 22 V130 H0Z" fill="#3a3d3a"/>
<path d="M0 62 L30 72 L60 88 L90 100 L60 130 H0Z" fill="#2a2c28"/>
<path d="M215 30 L180 56 L150 78 L120 92 L140 110 L215 120Z" fill="#262723"/>
<path d="M0 130 L40 110 L90 98 L130 104 L170 116 L215 124 V130Z" fill="#4a4538"/>
<path d="M62 96 Q100 100 140 112 T215 126" stroke="#b9bcc0" stroke-width="3" fill="none"/>
</g>
<g id="s-coral">
<rect width="215" height="130" fill="#12060f"/>
<g stroke-linecap="round" fill="none"><g stroke="#d2204e" stroke-width="5"><path d="M10 120 Q60 60 110 20"/><path d="M40 130 Q90 80 200 40"/><path d="M0 70 Q70 90 150 120"/><path d="M60 10 Q110 70 120 130"/><path d="M150 10 Q140 70 80 120"/><path d="M215 90 Q150 70 90 30"/><path d="M20 30 Q90 50 170 100"/></g>
<g stroke="#ff4f7a" stroke-width="2"><path d="M12 118 Q62 58 112 18"/><path d="M42 128 Q92 78 202 38"/><path d="M62 8 Q112 68 122 128"/><path d="M22 28 Q92 48 172 98"/></g>
<g stroke="#4a3cb0" stroke-width="4" opacity=".8"><path d="M0 100 Q50 40 100 0"/><path d="M120 130 Q170 80 215 60"/><path d="M100 60 Q150 40 215 10"/></g></g>
</g>
<g id="s-aerial">
<rect width="215" height="130" fill="#1d3550"/>
<path d="M0 0 H215 V30 L170 44 L120 50 L60 40 L0 48Z" fill="#223b5c"/>
<path filter="url(#fBlur1)" d="M0 60 L30 50 L60 56 L90 46 L130 52 L160 42 L200 30 L215 34 V80 L180 96 L140 104 L100 98 L60 110 L20 100 L0 104Z" fill="#4a6a3a"/>
<path filter="url(#fBlur1)" d="M30 58 L60 62 L90 54 L120 60 L150 52 L140 70 L100 76 L60 74Z" fill="#b59a62"/>
<path filter="url(#fBlur1)" d="M0 104 L20 100 L60 110 L100 98 L140 104 L180 96 L215 80 V130 H0Z" fill="#2f86a8"/>
</g>
<linearGradient id="gV0" gradientUnits="userSpaceOnUse" x1="20" y1="0" x2="170" y2="120"><stop offset="0" stop-color="#f8de88"/><stop offset=".25" stop-color="#f1c068"/><stop offset=".6" stop-color="#e9a354"/><stop offset="1" stop-color="#d9743c"/></linearGradient>
<radialGradient id="gV4" cx="0" cy="0" r="1" gradientUnits="userSpaceOnUse" gradientTransform="translate(150 112) scale(70 88)"><stop offset="0" stop-color="#a63e2c"/><stop offset=".45" stop-color="#bd5534"/><stop offset=".8" stop-color="#d7793f" stop-opacity=".7"/><stop offset="1" stop-color="#e59a50" stop-opacity="0"/></radialGradient>
<linearGradient id="gV1" gradientUnits="userSpaceOnUse" x1="10" y1="26" x2="140" y2="130"><stop offset="0" stop-color="#f4c970"/><stop offset=".4" stop-color="#eba857"/><stop offset="1" stop-color="#d56c3a"/></linearGradient>
<linearGradient id="gV2" gradientUnits="userSpaceOnUse" x1="0" y1="40" x2="80" y2="130"><stop offset="0" stop-color="#f2bd66"/><stop offset=".5" stop-color="#e99d50"/><stop offset="1" stop-color="#dc7f42"/></linearGradient>
<linearGradient id="gV2b" gradientUnits="userSpaceOnUse" x1="0" y1="68" x2="50" y2="130"><stop offset="0" stop-color="#f3c269"/><stop offset="1" stop-color="#e89b50"/></linearGradient>
<linearGradient id="gV3" gradientUnits="userSpaceOnUse" x1="215" y1="10" x2="160" y2="130"><stop offset="0" stop-color="#f5cb72"/><stop offset=".5" stop-color="#eda957"/><stop offset="1" stop-color="#dd7c40"/></linearGradient>
<linearGradient id="gVf" x1="0" y1="0" x2="0" y2="1"><stop offset="0" stop-color="#9c3828" stop-opacity="0"/><stop offset=".4" stop-color="#9c3828" stop-opacity=".3"/><stop offset="1" stop-color="#9c3828" stop-opacity=".45"/></linearGradient>
<g id="s-ventura">
<rect width="215" height="130" fill="#5f8fd0"/>
<path d="M0 9 Q6 0 24 0 H181 Q197 14 193 36 L199 30 Q206 18 215 8 V130 H26 Q10 122 0 111Z" fill="url(#gV0)"/>
<ellipse cx="62" cy="8" rx="52" ry="13" fill="#fbe996" opacity=".65" filter="url(#fBlur3)"/>
<path d="M176 4 Q196 16 192 40 Q186 30 170 8Z" fill="#e2a060" opacity=".5" filter="url(#fBlur1)"/>
<path d="M60 50 Q110 14 150 18 Q182 26 198 44 L176 68 Q160 100 148 134 Q120 95 60 60Z" fill="url(#gV4)" filter="url(#fBlur3)"/>
<path d="M131 30 Q136 84 148 132 Q164 96 194 46 Q160 26 131 30Z" fill="url(#gVf)" filter="url(#fBlur1)"/>
<path d="M9 24 Q30 38 49 56 Q80 75 106 90 Q130 106 148 130 H86 Q75 100 63 85 Q45 60 9 30Z" fill="url(#gV1)"/>
<path d="M0 38 Q18 38 29 45.5 Q50 66 63 85 Q78 104 86 130 H57 Q48 110 35 97 Q20 80 0 68Z" fill="url(#gV2)"/>
<path d="M0 68 Q20 80 35 97 Q48 110 57 130 H26 Q10 122 0 111Z" fill="url(#gV2b)"/>
<path d="M215 8 Q206 18 199 30 Q185 46 174 62.5 Q158 95 148 130 H168 Q190 105 215 85Z" fill="url(#gV3)"/>
<path d="M215 85 Q190 105 168 130 H215Z" fill="#f2ba63"/>
</g>
</defs>
</svg>
<div class="th" id="th-floating" style="left:43px;top:522px"><svg width="215" height="130" viewBox="0 0 215 130"><defs><linearGradient id="gFl" x1="0" y1="0" x2="0" y2="1"><stop offset="0" stop-color="#222"/><stop offset=".5" stop-color="#0a0a0a"/><stop offset="1" stop-color="#000"/></linearGradient></defs><rect width="215" height="130" fill="url(#gFl)"/><svg x="83" y="25" width="55" height="56" viewBox="0 0 215 130" preserveAspectRatio="xMidYMid slice"><use href="#s-grass"/></svg><svg x="0" y="0" width="106" height="53" viewBox="0 32 215 98" preserveAspectRatio="xMidYMid slice"><use href="#s-coast"/></svg><svg x="152" y="0" width="56" height="42" viewBox="0 0 215 130" preserveAspectRatio="xMidYMid slice"><use href="#s-redcoast"/></svg><svg x="179" y="53" width="31" height="25" viewBox="70 20 100 80" preserveAspectRatio="xMidYMid slice"><use href="#s-purple"/></svg><svg x="106" y="78" width="106" height="52" viewBox="20 -10 190 93" preserveAspectRatio="xMidYMid slice"><use href="#s-purple"/></svg><svg x="53" y="76" width="31" height="31" viewBox="0 0 200 130" preserveAspectRatio="xMidYMid slice"><use href="#s-mtn"/></svg><svg x="12" y="83" width="58" height="47" viewBox="40 10 175 120" preserveAspectRatio="xMidYMid slice"><use href="#s-rocks"/></svg><svg x="3" y="112" width="9" height="18" viewBox="0 0 60 120" preserveAspectRatio="xMidYMid slice"><use href="#s-coast"/></svg></svg></div>
<div class="cap" style="left:43px;top:661px;letter-spacing:0.74px">Floating</div>
<div class="th" id="th-flipup" style="left:275px;top:522px"><svg width="215" height="130" viewBox="0 0 215 130"><defs><linearGradient id="gFu1" x1="0" y1="0" x2="0" y2="1"><stop offset="0" stop-color="#3c3c3c"/><stop offset="1" stop-color="#2a2a2a"/></linearGradient><linearGradient id="gFu2" x1="0" y1="0" x2="0" y2="1"><stop offset="0" stop-color="#1c1c1c"/><stop offset=".6" stop-color="#050505"/><stop offset="1" stop-color="#000"/></linearGradient><linearGradient id="gFuR" x1="0" y1="0" x2="0" y2="1"><stop offset="0" stop-color="#2c7fa6" stop-opacity=".6"/><stop offset="1" stop-color="#2c7fa6" stop-opacity="0"/></linearGradient></defs><rect width="215" height="69" fill="url(#gFu1)"/><rect y="69" width="215" height="61" fill="url(#gFu2)"/><svg x="199" y="44" width="16" height="41" viewBox="0 0 60 130" preserveAspectRatio="xMidYMid slice"><use href="#s-mtn"/></svg><svg x="164" y="39" width="35" height="53" viewBox="60 0 110 130" preserveAspectRatio="xMidYMid slice"><use href="#s-grass"/></svg><rect x="164" y="92" width="35" height="16" fill="url(#gFuR)"/><svg x="50" y="9" width="114" height="112" viewBox="40 0 125 100" preserveAspectRatio="xMidYMid slice"><use href="#s-coast"/></svg><rect x="50" y="121" width="114" height="9" fill="#1d4a48" opacity=".6"/></svg></div>
<div class="cap" style="left:275px;top:661px;letter-spacing:1.05px">Flip-up</div>
<div class="th" id="th-reflections" style="left:508px;top:522px"><svg width="215" height="130" viewBox="0 0 215 130"><defs><linearGradient id="gRf" x1="0" y1="0" x2="1" y2="0"><stop offset="0" stop-color="#e4e4e4"/><stop offset=".08" stop-color="#fafafa"/><stop offset=".92" stop-color="#fafafa"/><stop offset="1" stop-color="#e4e4e4"/></linearGradient><linearGradient id="gRf2" x1="0" y1="0" x2="0" y2="1"><stop offset="0" stop-color="#ddd" stop-opacity="0"/><stop offset=".5" stop-color="#d6d6d6" stop-opacity=".7"/><stop offset="1" stop-color="#ddd" stop-opacity="0"/></linearGradient><linearGradient id="gRf3" x1="0" y1="0" x2="0" y2="1"><stop offset="0" stop-color="#fff" stop-opacity=".2"/><stop offset="1" stop-color="#fff" stop-opacity=".8"/></linearGradient></defs><rect width="215" height="130" fill="url(#gRf)"/><rect y="78" width="215" height="30" fill="url(#gRf2)"/><svg x="21" y="6" width="85" height="56" viewBox="0 0 215 130" preserveAspectRatio="xMidYMid slice"><use href="#s-coast"/></svg><svg x="109" y="6" width="85" height="56" viewBox="0 0 215 130" preserveAspectRatio="xMidYMid slice"><use href="#s-grass"/></svg><svg x="21" y="65" width="85" height="56" viewBox="10 14 176 116" preserveAspectRatio="xMidYMid slice"><use href="#s-mtn"/></svg><svg x="109" y="65" width="85" height="56" viewBox="40 10 175 115" preserveAspectRatio="xMidYMid slice"><use href="#s-rocks"/></svg><rect x="21" y="121" width="85" height="9" fill="#9a9a9a"/><rect x="109" y="121" width="85" height="9" fill="#a8a8a8"/><rect x="21" y="121" width="173" height="9" fill="url(#gRf3)"/><rect x=".5" y=".5" width="214" height="129" rx="6" fill="none" stroke="#d9d9d9"/></svg></div>
<div class="cap" style="left:508px;top:661px;letter-spacing:0.81px">Reflections</div>
<div class="th" id="th-origami" style="left:740px;top:522px"><svg width="215" height="130" viewBox="0 0 215 130"><defs><linearGradient id="gOg" x1="0" y1="0" x2="1" y2="1"><stop offset="0" stop-color="#75788f"/><stop offset=".6" stop-color="#5c5f76"/><stop offset="1" stop-color="#2a2b38"/></linearGradient></defs><svg x="0" y="0" width="68" height="65" viewBox="50 0 125 120" preserveAspectRatio="xMidYMid slice"><use href="#s-coast"/></svg><svg x="0" y="65" width="68" height="65" viewBox="40 0 140 130" preserveAspectRatio="xMidYMid slice"><use href="#s-grass"/></svg><svg x="68" y="0" width="147" height="130" viewBox="26 0 147 130" preserveAspectRatio="xMidYMid slice"><use href="#s-mtn"/></svg><path d="M175 83 H215 V130 H169 V89 Q169 83 175 83Z" fill="url(#gOg)"/><path d="M190 130 L215 100 V112 L200 130Z" fill="#15161c" opacity=".8"/><path d="M196 130 L215 108 V130Z" fill="#d9dae0" opacity=".5"/></svg></div>
<div class="cap" style="left:740px;top:661px;letter-spacing:0.78px">Origami</div>
<div class="th" id="th-shifting" style="left:43px;top:716px"><svg width="215" height="130" viewBox="0 0 215 130"><rect width="215" height="130" fill="#0a0a0c"/><svg x="0" y="0" width="84" height="62" viewBox="30 0 160 118" preserveAspectRatio="xMidYMid slice"><use href="#s-coast"/></svg><svg x="87" y="0" width="89" height="62" viewBox="0 0 215 130" preserveAspectRatio="xMidYMid slice"><use href="#s-grass"/></svg><svg x="178" y="0" width="37" height="28" viewBox="0 0 215 130" preserveAspectRatio="xMidYMid slice"><use href="#s-road"/></svg><svg x="178" y="30" width="37" height="32" viewBox="0 0 215 130" preserveAspectRatio="xMidYMid slice"><use href="#s-redcoast"/></svg><svg x="0" y="65" width="84" height="65" viewBox="30 5 135 105" preserveAspectRatio="xMidYMid slice"><use href="#s-mtn"/></svg><svg x="87" y="65" width="43" height="33" viewBox="0 0 215 130" preserveAspectRatio="xMidYMid slice"><use href="#s-aerial"/></svg><svg x="87" y="101" width="43" height="29" viewBox="0 0 215 130" preserveAspectRatio="xMidYMid slice"><use href="#s-coral"/></svg><svg x="132" y="65" width="83" height="65" viewBox="60 10 155 120" preserveAspectRatio="xMidYMid slice"><use href="#s-rocks"/></svg></svg></div>
<div class="cap" style="left:43px;top:855px;letter-spacing:0.93px">Shifting Tiles</div>
<div class="th" id="th-sliding" style="left:275px;top:716px"><svg width="215" height="130" viewBox="0 0 215 130"><rect width="215" height="130" fill="#08080a"/><svg x="0" y="0" width="144" height="130" viewBox="28 0 144 130" preserveAspectRatio="xMidYMid slice"><use href="#s-mtn"/></svg><svg x="147" y="0" width="68" height="64" viewBox="66 14 100 94" preserveAspectRatio="xMidYMid slice"><use href="#s-purple"/></svg><svg x="147" y="67" width="68" height="63" viewBox="60 10 150 120" preserveAspectRatio="xMidYMid slice"><use href="#s-rocks"/></svg></svg></div>
<div class="cap" style="left:275px;top:855px;letter-spacing:0.55px">Sliding Panels</div>
<div class="th" id="th-photomobile" style="left:508px;top:716px"><svg width="215" height="130" viewBox="0 0 215 130"><defs><linearGradient id="gPm" x1="0" y1="0" x2="1" y2="0"><stop offset="0" stop-color="#8c8c8c"/><stop offset=".1" stop-color="#b9b9b9"/><stop offset=".3" stop-color="#cfcfcf"/><stop offset=".55" stop-color="#e2e2e2"/><stop offset=".85" stop-color="#c6c6c6"/><stop offset="1" stop-color="#9a9a9a"/></linearGradient><linearGradient id="gPm2" x1="0" y1="0" x2="0" y2="1"><stop offset="0" stop-color="#000" stop-opacity="0"/><stop offset=".75" stop-color="#000" stop-opacity=".12"/><stop offset="1" stop-color="#000" stop-opacity=".42"/></linearGradient></defs><rect width="215" height="130" fill="url(#gPm)"/><rect width="215" height="130" fill="url(#gPm2)"/><g fill="#fff" opacity=".28" filter="url(#fBlur1)"><circle cx="18" cy="60" r="30"/><circle cx="80" cy="126" r="14"/><circle cx="200" cy="100" r="22"/><circle cx="4" cy="104" r="12"/></g><g stroke="#fff" stroke-width="1" opacity=".9"><path d="M22.5 0V130"/><path d="M110.5 0V12"/><path d="M196.5 0V130"/><path d="M206.5 0V60"/></g><rect x="176" y="96" width="39" height="27" fill="#fff"/><svg x="178" y="98" width="37" height="23" viewBox="60 30 150 90" preserveAspectRatio="xMidYMid slice"><use href="#s-rocks"/></svg><rect x="189" y="18" width="19" height="21" fill="#fff"/><svg x="190.5" y="19.5" width="16" height="18" viewBox="0 0 215 130" preserveAspectRatio="xMidYMid slice"><use href="#s-coral"/></svg><rect x="190" y="52" width="25" height="21" fill="#fff"/><svg x="191.5" y="53.5" width="24" height="18" viewBox="0 0 215 130" preserveAspectRatio="xMidYMid slice"><use href="#s-grass"/></svg><rect x="4" y="69" width="28" height="23" fill="#fff"/><svg x="5.5" y="70.5" width="26" height="20" viewBox="0 0 200 130" preserveAspectRatio="xMidYMid slice"><use href="#s-mtn"/></svg><rect x="31" y="11" width="159" height="106" fill="#fff"/><svg x="33.5" y="13.5" width="154" height="101" viewBox="10 14 176 116" preserveAspectRatio="xMidYMid slice"><use href="#s-mtn"/></svg></svg></div>
<div class="cap" style="left:508px;top:855px;letter-spacing:0.91px">Photo Mobile</div>
<div class="th" id="th-holidaymobile" style="left:740px;top:716px"><svg width="215" height="130" viewBox="0 0 215 130"><defs><linearGradient id="gHm" x1="0" y1="0" x2="1" y2=".2"><stop offset="0" stop-color="#d9daf0"/><stop offset=".5" stop-color="#cdcfec"/><stop offset=".62" stop-color="#c3c5e8"/><stop offset=".85" stop-color="#c9caea"/><stop offset="1" stop-color="#bfc0dc"/></linearGradient></defs><rect width="215" height="130" fill="url(#gHm)"/><g stroke="#fff" stroke-width="1.2" opacity=".95"><path d="M110.5 0V12"/><path d="M197 0V100"/></g><rect x="176" y="96" width="39" height="27" fill="#fff"/><svg x="178" y="98" width="37" height="23" viewBox="0 0 215 130" preserveAspectRatio="xMidYMid slice"><use href="#s-coast"/></svg><rect x="31" y="11" width="159" height="106" fill="#fff"/><svg x="33.5" y="13.5" width="154" height="101" viewBox="10 14 176 116" preserveAspectRatio="xMidYMid slice"><use href="#s-mtn"/></svg><rect x=".5" y=".5" width="214" height="129" rx="6" fill="none" stroke="#c9c9e0" opacity=".8"/></svg></div>
<div class="cap" style="left:740px;top:855px;letter-spacing:0.86px">Holiday Mobile</div>
<div class="th" id="th-photowall" style="left:43px;top:910px"><svg width="215" height="130" viewBox="0 0 215 130"><defs><linearGradient id="gPw" x1="0" y1="0" x2="0" y2="1"><stop offset="0" stop-color="#eeeeed"/><stop offset="1" stop-color="#e4e4e3"/></linearGradient><linearGradient id="gPwF" x1="0" y1="0" x2="0" y2="1"><stop offset="0" stop-color="#c9a176"/><stop offset=".4" stop-color="#ecc79c"/><stop offset="1" stop-color="#e6bd90"/></linearGradient></defs><rect width="215" height="130" fill="url(#gPw)"/><rect y="124" width="215" height="6" fill="url(#gPwF)"/><rect x="0" y="16.5" width="94" height="72" fill="#1e2126"/><rect x="4.5" y="21" width="85" height="63" fill="#d9d4d1"/><svg x="13.6" y="30" width="66.5" height="45.5" viewBox="0 0 215 130" preserveAspectRatio="xMidYMid slice"><use href="#s-coast"/></svg><rect x="102" y="7" width="80" height="55" fill="#6a4631"/><rect x="103" y="8" width="78" height="53" fill="none" stroke="#8a5f44" stroke-width="1"/><svg x="105.5" y="10.5" width="73" height="48" viewBox="0 0 215 130" preserveAspectRatio="xMidYMid slice"><use href="#s-road"/></svg><rect x="190" y="29.5" width="25" height="67.5" fill="#cfc5b6"/><rect x="191" y="30.5" width="24" height="65.5" fill="none" stroke="#b3a794" stroke-width="1"/><svg x="196" y="35.5" width="19" height="55.5" viewBox="0 0 80 130" preserveAspectRatio="xMidYMid slice"><use href="#s-coral"/></svg><rect x="109" y="78" width="66.5" height="50" fill="#4a2b1d"/><rect x="110" y="79" width="64.5" height="48" fill="none" stroke="#6b412c" stroke-width="1"/><svg x="115" y="84" width="54.5" height="38" viewBox="14 14 166 116" preserveAspectRatio="xMidYMid slice"><use href="#s-mtn"/></svg><rect x=".5" y=".5" width="214" height="129" rx="6" fill="none" stroke="#d5d2cd"/></svg></div>
<div class="cap" style="left:43px;top:1049px;letter-spacing:0.74px">Photo Wall</div>
<div class="th" id="th-vintage" style="left:275px;top:910px"><svg width="215" height="130" viewBox="0 0 215 130"><defs><linearGradient id="gVp" x1="0" y1="0" x2="1" y2="1"><stop offset="0" stop-color="#4a4947"/><stop offset=".5" stop-color="#3a3937"/><stop offset="1" stop-color="#2b2a29"/></linearGradient><filter id="fGray"><feColorMatrix type="saturate" values="0"/></filter></defs><rect width="215" height="130" fill="url(#gVp)"/><g filter="url(#fGray)"><g transform="rotate(-16 20 60)"><rect x="-30" y="22" width="84" height="70" fill="#c4c4c2"/><rect x="-27" y="25" width="78" height="64" fill="#4c4c4c"/><path filter="url(#fRockSoft)" d="M-27 70 L-6 46 L14 40 L30 56 L51 62 V89 H-27Z" fill="#8c8a87"/></g><g transform="rotate(-18 20 110)"><rect x="-16" y="84" width="84" height="70" fill="#c4c4c2"/><rect x="-13" y="87" width="78" height="64" fill="#444"/><path filter="url(#fRockSoft)" d="M0 87 H65 V151 H-13Z" fill="#827f7c"/></g><g transform="rotate(-14 190 80)"><rect x="142" y="34" width="70" height="100" fill="#bcbcba"/><rect x="145" y="37" width="64" height="94" fill="#3c3c3c"/><path filter="url(#fRockSoft)" d="M160 44 L190 37 L209 60 V131 H170Z" fill="#7c7a77"/></g></g><path d="M170 0 L215 0 L215 60 L196 40Z" fill="#1f1f1e" opacity=".6"/><g transform="matrix(1 -.04 .095 1 0 0)"><rect x="39.5" y="7" width="129" height="122.5" fill="#e6e9e8"/><svg x="42.5" y="10" width="123" height="116.5" viewBox="34 -8 130 123" preserveAspectRatio="xMidYMid slice"><use href="#s-mtn"/></svg><rect x="42.5" y="10" width="123" height="116.5" fill="#6a6a48" opacity=".22"/></g></svg></div>
<div class="cap" style="left:275px;top:1049px;letter-spacing:0.70px">Vintage Prints</div>
<div class="th" id="th-kenburns" style="left:508px;top:910px"><svg width="215" height="130" viewBox="0 0 215 130"><svg x="0" y="0" width="215" height="130" viewBox="24.5 25 135 82" preserveAspectRatio="xMidYMid slice"><use href="#s-mtn"/></svg></svg></div>
<div class="cap" style="left:508px;top:1049px;letter-spacing:0.40px">Ken Burns</div>
<div class="th" id="th-classic" style="left:740px;top:910px"><svg width="215" height="130" viewBox="0 0 215 130"><defs><linearGradient id="gCl" x1="0" y1="0" x2="0" y2="1"><stop offset="0" stop-color="#1f5a6a" stop-opacity="0"/><stop offset=".5" stop-color="#1f5a6a" stop-opacity=".35"/><stop offset="1" stop-color="#1b4f62" stop-opacity=".6"/></linearGradient></defs><svg x="0" y="0" width="215" height="130" viewBox="11.5 15 165 100" preserveAspectRatio="xMidYMid slice"><use href="#s-mtn"/></svg><rect y="50" width="215" height="80" fill="url(#gCl)"/><g stroke="#a9dcf0" stroke-width="1.1" opacity=".35" fill="none"><path d="M160 60 L168 30"/><path d="M168 62 L174 32"/><path d="M176 58 L184 28"/><path d="M186 56 L196 30"/><path d="M150 70 L156 44"/><path d="M130 76 L134 58"/><path d="M120 82 L124 62"/><path d="M70 100 L70 76"/><path d="M196 60 L204 36"/></g><g stroke="#2d6a7a" stroke-width="1" opacity=".4" fill="none"><path d="M10 110 L30 84"/><path d="M20 116 L44 86"/><path d="M34 120 L60 88"/><path d="M50 122 L74 92"/><path d="M66 124 L90 96"/><path d="M90 126 L110 100"/></g></svg></div>
<div class="cap" style="left:740px;top:1049px;letter-spacing:0.60px">Classic</div>
<div class="th" id="th-ventura" style="left:43px;top:1104px"><svg width="215" height="130" viewBox="0 0 215 130"><use href="#s-ventura"/><rect x="2.8" y="2.8" width="209.4" height="124.4" rx="5" fill="none" stroke="#fff" stroke-width="2.6"/><rect x=".5" y=".5" width="214" height="129" rx="6" fill="none" stroke="#cfcac4" stroke-width="1" opacity=".35"/></svg></div>
<div class="cap" style="left:43px;top:1242px;letter-spacing:0.72px">Ventura</div>
<div class="th" id="th-monterey" style="left:275px;top:1104px"><svg width="215" height="130" viewBox="0 0 215 130"><defs>
<linearGradient id="gMoH" x1="0" y1="0" x2="1" y2="0"><stop offset=".2" stop-color="#c9c6e2"/><stop offset=".42" stop-color="#d2c2dc"/><stop offset=".62" stop-color="#d79cc4"/><stop offset=".85" stop-color="#cf74ae"/><stop offset="1" stop-color="#c765a6"/></linearGradient>
<linearGradient id="gMoV" x1="0" y1="0" x2="0" y2="1"><stop offset="0" stop-color="#c33aae" stop-opacity="0"/><stop offset=".35" stop-color="#c33aae" stop-opacity=".1"/><stop offset=".7" stop-color="#c23ab4" stop-opacity=".75"/><stop offset=".85" stop-color="#a42ccc" stop-opacity=".95"/><stop offset="1" stop-color="#6a1cd4"/></linearGradient>
<linearGradient id="gMoL" x1="0" y1="0" x2="1" y2="1"><stop offset="0" stop-color="#c43aa8"/><stop offset="1" stop-color="#b536ac"/></linearGradient>
</defs>
<rect width="215" height="130" fill="url(#gMoH)"/>
<g filter="url(#fBlur3)" opacity=".55"><path d="M120 0 L132 0 L126 60 L118 90Z" fill="#e6d6ea"/><path d="M150 0 L170 0 L150 70 L140 100Z" fill="#e3b6d4"/><path d="M190 0 L200 0 L180 80Z" fill="#d990bc"/></g>
<rect width="215" height="130" fill="url(#gMoV)"/>
<path d="M130 130 Q150 106 215 96 V130Z" fill="#8a22d8" opacity=".75"/>
<path d="M0 0 H40.6 L56 17 L73 28 L87.5 52.5 L101.7 76.7 L116 99.5 L127 116.5 L130 130 H0Z" fill="url(#gMoL)"/>
<path d="M0 20 Q30 24 60 42 T100 78 L127 116.5 L130 130 H0Z" fill="#a534b0"/>
<path d="M0 37 Q26 40 50 52 T90 80 L118 104 L130 130 H0Z" fill="#8a2cb8"/>
<path d="M0 60 Q26 62 50 70 T96 100 L124 118 L130 130 H0Z" fill="#6c22bc"/>
<path d="M0 80 Q26 82 50 92 T100 118 L120 130 H0Z" fill="#5119b6"/>
<path d="M0 102 Q20 102 40 110 T86 130 H0Z" fill="#3c169c"/>
<path d="M0 116 Q24 116 50 130 H0Z" fill="#2f1284"/>
<path d="M40.6 0 L56 17 L73 28 L87.5 52.5 L101.7 76.7 L116 99.5 L127 116.5" fill="none" stroke="#e6c8e6" stroke-width=".8" opacity=".5"/>
</svg></div>
<div class="cap" style="left:275px;top:1242px;letter-spacing:0.69px">Monterey</div>
<div class="th" id="th-hello" style="left:508px;top:1104px"><svg width="215" height="130" viewBox="0 0 215 130"><defs><linearGradient id="gHe" x1="0" y1="0" x2="0" y2="1"><stop offset="0" stop-color="#4a4a4a"/><stop offset=".35" stop-color="#2c2c2c"/><stop offset=".7" stop-color="#0a0a0a"/><stop offset="1" stop-color="#000"/></linearGradient></defs><rect width="215" height="130" fill="url(#gHe)"/><path d="M20 78 C34 74 46 52 46 40 C46 30 38 32 37 44 C35 60 34 74 32 84 C36 70 44 62 50 62 C58 62 52 82 60 84 C70 86 80 78 84 70 C88 62 82 56 76 60 C68 66 70 84 84 84 C96 84 106 66 110 50 C113 36 104 32 102 46 C100 60 100 84 112 84 C124 84 134 64 136 50 C138 36 130 32 128 46 C126 60 126 84 138 84 C146 84 150 76 152 70 C154 60 162 56 168 60 C176 66 172 84 160 84 C150 84 150 66 160 60 C168 56 180 66 194 60" fill="none" stroke="#fff" stroke-width="5.2" stroke-linecap="round" stroke-linejoin="round"/></svg></div>
<div class="cap" style="left:508px;top:1242px;letter-spacing:0.80px">Hello</div>
<div class="th" id="th-drift" style="left:740px;top:1104px"><svg width="215" height="130" viewBox="0 0 215 130"><rect width="215" height="130" fill="#08080b"/><g filter="url(#fBlur6)" opacity=".35"><ellipse cx="30" cy="24" rx="52" ry="30" fill="#9a8a6c"/><ellipse cx="196" cy="44" rx="34" ry="44" fill="#d03a92"/><ellipse cx="186" cy="116" rx="44" ry="24" fill="#8a2ad0"/><ellipse cx="70" cy="72" rx="40" ry="18" fill="#36b08c" transform="rotate(38 70 72)"/><ellipse cx="24" cy="112" rx="44" ry="20" fill="#236c98"/><ellipse cx="118" cy="58" rx="30" ry="26" fill="#000"/></g><g fill="none" stroke-width="1.2" stroke-linecap="round"><path stroke="#b4849c" d="M-3 -3L4 -14"/><path stroke="#9c8484" d="M4 -6L10 -18M20 -6L24 -12M31 3L37 -6M15 9L19 -0M24 8L28 0M14 15L17 9M8 16L10 9M3 22L4 15M25 18L29 10M2 24L7 12M-5 27L-1 17M8 28L12 19M-0 35L2 27M25 32L30 19M2 38L7 25"/><path stroke="#846c6c" d="M9 -6L13 -13M32 -2L39 -14M-5 0L-2 -6M36 -1L41 -11M98 -2L105 -7M22 5L29 -6M-0 7L3 -5M24 4L28 -1M-6 10L-2 -1M5 14L7 7M22 15L27 3M136 12L146 7M11 25L13 15M117 23L125 18M133 29L139 26"/><path stroke="#cc9c9c" d="M13 -6L17 -14M36 -5L44 -14M98 5L105 0M9 8L12 -1M13 6L18 -5M104 8L112 1M119 11L126 7M127 13L134 9"/><path stroke="#543c3c" d="M22 -6L27 -13M0 -3L4 -11M127 -1L137 -6M136 -2L147 -5M141 -0L150 -3M3 1L7 -6M152 3L160 1M114 5L124 -0M136 9L146 6M28 12L33 -0M91 15L95 10M151 12L162 10M165 15L176 13M25 15L30 3M102 15L108 11M6 21L8 11M110 21L116 16M126 21L132 18M148 25L156 24M4 25L7 18M109 28L116 22M136 29L146 27M106 31L113 26M123 35L131 31M146 33L156 33M154 40L160 40M140 44L147 45"/><path stroke="#3c3c3c" d="M43 -5L47 -12M44 -2L51 -11M129 3L137 -1M90 10L97 3M2 14L6 1M99 15L106 10M-6 20L-3 13M131 22L137 20M102 25L109 19M73 29L79 21M105 27L110 23M34 33L37 26M65 32L69 24M98 30L104 25M90 39L94 34M108 37L113 33M126 39L131 38M14 44L17 34M21 46L23 35M18 53L19 44M46 54L46 46M5 59L5 49M36 60L38 53M14 65L13 53M-4 67L-3 54M-2 79L-3 68"/><path stroke="#9c846c" d="M44 -5L49 -10M79 -4L85 -9M73 4L80 -5M82 8L91 2M86 8L93 1M101 7L109 0M82 11L88 7M42 12L46 2M85 13L89 8M74 15L81 6M37 22L42 12"/><path stroke="#54543c" d="M51 -5L58 -12M53 1L58 -7M56 2L60 -5M90 4L96 -0M34 7L39 -4M46 14L51 7M69 16L75 6M82 13L90 6M92 17L97 11M111 17L120 13M33 21L38 13M39 20L45 12M47 20L52 11M58 20L65 11M69 19L73 14M78 19L84 14M93 22L97 17M21 29L23 20M82 26L88 19M42 30L46 19M54 29L58 22M78 31L83 22M100 30L105 25M8 39L10 29M31 38L33 31M99 37L102 32M14 41L15 29M40 40L41 33M50 43L52 33M35 43L36 32M62 43L65 33M36 49L38 41"/><path stroke="#3c2424" d="M58 -3L65 -15M35 1L38 -7M100 1L107 -4M69 5L75 -2M42 8L48 0M35 18L39 9M121 15L126 12M95 19L101 14M111 19L116 16M97 23L103 16M12 26L14 18M91 28L95 24M114 31L122 28M136 30L142 28M-4 33L-2 20M107 32L115 28M141 33L150 31M147 46L156 49"/><path stroke="#6c543c" d="M64 -2L71 -13M73 -3L83 -11M62 3L69 -8M118 1L124 -2M102 12L108 6"/><path stroke="#b49c84" d="M69 -6L74 -13M30 2L36 -6M43 2L48 -6M57 2L65 -9M50 1L56 -7M71 4L78 -3M40 5L48 -4M50 5L55 -6M63 11L69 2M47 19L51 12M82 18L90 10M87 16L94 10M84 18L91 12M25 27L29 15M20 28L25 18M19 33L22 19M33 32L38 22"/><path stroke="#3c3c24" d="M87 -2L95 -12M97 -5L103 -10M101 -3L107 -6M48 4L54 -5M78 2L83 -5M108 5L115 1M112 5L121 -1M45 10L50 1M51 12L56 4M57 12L63 4M57 15L63 8M72 14L80 7M112 15L118 10M54 15L58 7M107 14L113 10M62 21L68 10M77 22L81 15M61 26L65 17M79 23L83 18M90 23L96 17M91 33L96 27M90 34L96 29M98 35L103 29M82 36L87 30M46 41L49 28"/><path stroke="#cc9c84" d="M90 -3L98 -8M115 -4L121 -8M82 -3L88 -9M97 8L103 3M95 10L101 4M108 8L117 2"/><path stroke="#9c6c6c" d="M110 -4L117 -8M90 -0L98 -7M143 2L152 -3M123 7L134 4M122 14L128 10M118 20L125 17M140 23L148 22"/><path stroke="#b48484" d="M117 -4L124 -7M138 -2L147 -5M116 1L121 -2M129 1L139 -5M-5 4L1 -7M110 8L119 3M130 5L139 1M4 12L7 0M6 8L10 -0M111 8L117 5M-2 11L1 4M98 18L103 12M130 24L136 22"/><path stroke="#845454" d="M127 -3L134 -6M132 17L138 15M126 31L134 29"/><path stroke="#e49c9c" d="M129 -2L137 -7M124 2L130 -1"/><path stroke="#84546c" d="M141 -5L149 -8M150 -2L159 -4M151 -5L163 -8M13 -2L17 -7M157 1L170 -1M174 2L181 1M173 6L187 6M142 11L151 6M165 12L178 12M185 10L192 8M165 27L173 28M140 32L146 31M154 30L162 29M145 47L151 47"/><path stroke="#cc849c" d="M160 -3L171 -5M148 1L155 -2M142 8L151 5M168 7L180 6M168 12L178 10M136 18L142 16"/><path stroke="#cc84b4" d="M163 -3L173 -6"/><path stroke="#b46c84" d="M171 -5L182 -6M175 9L184 10M182 8L193 7M148 12L159 10M148 19L155 19M145 32L155 32M169 31L181 31M145 37L154 38"/><path stroke="#9c5484" d="M173 -4L184 -6M193 -2L203 -1M162 21L171 21M181 22L189 22M185 24L198 26M186 31L194 32"/><path stroke="#b46c9c" d="M182 -3L192 -4M210 -4L222 -4M191 -3L199 -3M180 4L193 3M188 3L200 2M173 15L184 14M154 21L165 20M171 19L182 19M174 19L185 19M151 22L156 21M154 28L161 27M164 40L170 41"/><path stroke="#e484b4" d="M188 -2L200 -4M194 4L203 4M146 4L157 1M154 6L164 4M145 18L153 16M166 24L173 23M170 23L177 23M160 36L166 36M157 41L166 43"/><path stroke="#cc6c9c" d="M196 -2L206 -2M208 -1L216 -1M182 7L191 8M190 5L198 5M170 12L177 11M158 25L166 24"/><path stroke="#b45484" d="M204 -3L216 -4M204 2L216 0M203 18L213 20M179 31L191 35M192 29L205 31"/><path stroke="#b4549c" d="M215 -6L225 -7M181 29L192 30M155 46L164 47"/><path stroke="#9c6c84" d="M6 -3L10 -11M135 1L146 -3M147 10L154 9M158 11L167 10M140 17L148 14M154 16L161 15M159 18L168 16M147 28L156 28"/><path stroke="#6c5454" d="M17 -1L22 -13M22 0L26 -10M102 -2L109 -7M-4 2L2 -7M14 4L18 -6M17 2L22 -6M73 6L81 -2M91 5L96 1M121 7L127 4M135 8L142 5M35 9L40 3M74 12L83 3M126 8L134 3M151 9L157 8M20 12L24 4M141 15L150 13M3 16L9 5M13 18L17 9M125 18L134 14M19 22L22 12M140 19L149 17M-4 25L-1 13M84 23L91 15M112 26L120 22M136 23L142 22M27 27L31 16M117 28L122 26M126 29L131 27M2 29L5 18M131 33L137 32M136 35L144 35"/><path stroke="#6c6c54" d="M64 -2L71 -8M68 2L74 -5M43 3L47 -3M47 6L53 -5M64 8L68 2M85 12L91 8M27 15L31 8M57 15L60 9M71 18L75 10M50 22L54 14M19 25L24 12M43 25L47 19M73 25L80 16M34 26L38 17M84 26L91 20M29 30L33 17M47 29L50 19M68 30L72 21M73 30L76 24M13 36L16 29M31 34L35 21M39 32L43 23M45 35L50 25M52 34L55 25M41 39L45 28M-5 41L-3 29M39 44L42 35"/><path stroke="#9c9c6c" d="M73 0L79 -6M69 11L73 5M48 26L53 18M67 26L71 19M42 27L47 19M56 30L61 22M60 36L63 26M46 40L49 33"/><path stroke="#ccb484" d="M87 -2L92 -7"/><path stroke="#846c54" d="M109 -0L115 -5M119 -0L128 -4M85 5L91 -1M106 13L115 9M101 22L109 17M60 24L65 14M97 28L104 23"/><path stroke="#fc9ccc" d="M154 0L165 -4"/><path stroke="#6c3c54" d="M161 0L173 -4M165 2L172 1M198 1L209 1M197 1L205 -0M157 5L170 3M162 5L173 3M164 17L172 16M169 15L178 15M180 19L189 18M193 17L200 18M134 21L139 19M158 22L167 21M163 31L170 32M149 40L154 40M153 40L163 40M159 46L167 48M154 46L163 48"/><path stroke="#543c54" d="M172 -2L181 -3M179 -0L192 -1M188 6L196 5M143 27L150 26M136 39L143 39M135 48L142 50M140 48L147 49"/><path stroke="#54243c" d="M176 -3L185 -5M203 -2L214 -1M215 -3L223 -2M170 2L181 -2M205 7L213 8M212 15L224 17M173 16L182 17M179 20L187 20M191 19L204 19M160 30L170 32M199 34L212 37M176 43L188 47M179 50L191 56M190 53L198 57M166 53L174 56M180 60L190 67"/><path stroke="#fc84cc" d="M186 -1L196 -2M188 12L198 11"/><path stroke="#cc9cb4" d="M9 4L12 -3M-4 17L-2 9"/><path stroke="#e49cb4" d="M148 2L158 -0"/><path stroke="#9c546c" d="M162 1L169 -1M161 12L168 10M151 32L160 31"/><path stroke="#e46cb4" d="M207 1L216 -0M177 25L187 24M175 29L183 31M170 35L177 37"/><path stroke="#843c6c" d="M217 3L226 3M216 4L226 5M199 9L210 10M181 15L190 16M187 17L200 16M197 16L207 17M198 28L206 29M174 30L182 31M168 46L180 48M168 53L174 55"/><path stroke="#b49c9c" d="M19 9L22 2M20 10L23 2M12 21L17 9M24 26L28 15"/><path stroke="#545454" d="M30 8L33 1M-3 29L-2 19M86 37L90 30M9 43L11 33M21 43L21 36M23 47L23 37M44 50L48 37M-6 50L-5 37M35 53L35 44"/><path stroke="#b49c6c" d="M56 8L62 -2"/><path stroke="#fc84b4" d="M199 8L210 9"/><path stroke="#cc549c" d="M207 5L217 5M211 8L218 8M189 26L196 27"/><path stroke="#ccb49c" d="M28 9L31 -1"/><path stroke="#6c3c3c" d="M130 10L140 6"/><path stroke="#cc6cb4" d="M190 12L199 12M166 35L174 35M170 38L179 40M156 47L164 49"/><path stroke="#9c3c6c" d="M204 9L217 8M215 8L227 7M200 12L211 14M210 14L218 15M209 16L217 17M202 22L211 23M209 19L220 21M177 39L184 41M199 38L211 42"/><path stroke="#84846c" d="M33 13L37 3M52 14L59 5M42 18L49 7M52 25L58 13M48 28L54 17M51 27L53 20M57 26L59 20M63 27L69 17M67 30L71 21M8 31L12 21M25 30L28 18M87 33L92 28M62 36L66 30M68 34L73 24M-2 38L0 28M18 35L20 24M35 36L37 22M0 41L3 27M22 43L25 35M41 47L44 38"/><path stroke="#848454" d="M62 13L68 6"/><path stroke="#cc8484" d="M130 14L137 12"/><path stroke="#3c243c" d="M190 14L202 15M156 18L167 17M188 18L197 18M171 28L183 29M159 34L167 34M130 39L136 38M135 39L143 38M163 36L173 38M141 42L148 41M138 45L146 45M165 43L175 44M135 51L143 53M145 50L153 51M138 57L143 61M139 56L144 59M134 63L139 69"/><path stroke="#9c3c84" d="M205 14L217 15M193 22L206 25M174 41L187 43M171 43L179 45M160 50L166 53"/><path stroke="#6c6c6c" d="M20 16L25 5M24 41L27 34M9 53L11 44"/><path stroke="#b4b484" d="M62 18L66 11"/><path stroke="#b43c84" d="M216 16L227 17M191 34L204 35M188 39L199 41M196 43L205 46"/><path stroke="#b4b49c" d="M32 22L36 11M10 33L13 24"/><path stroke="#6c2454" d="M197 21L204 22M205 26L212 28M208 28L218 32M215 29L223 31M209 31L217 33M185 36L198 41M210 35L220 38M191 39L201 42M187 42L195 45M192 40L202 43M189 42L199 46M202 49L214 55M196 52L206 57M200 53L210 59M185 71L194 81M204 77L209 81"/><path stroke="#540c3c" d="M215 22L225 25M211 40L221 44M209 44L217 47M199 47L209 52M210 48L218 51M210 57L222 62M216 57L226 63M172 62L179 68"/><path stroke="#848484" d="M8 25L11 14M23 38L25 27M2 46L3 38M3 47L4 40"/><path stroke="#9c9c84" d="M28 25L32 15M13 32L14 25M11 40L13 27M17 40L20 29M28 42L29 35M-4 48L-2 41"/><path stroke="#242424" d="M110 22L116 19M123 26L129 24M115 27L121 24M129 28L135 27M119 33L125 30M104 34L108 30M112 36L117 34M85 38L88 31M120 37L125 34M123 37L129 36M142 36L150 36M32 40L33 33M36 41L41 29M104 43L107 40M129 42L134 42M91 46L95 39M126 47L133 46M14 50L16 40M98 51L99 46M97 53L98 46M4 67L5 58M33 78L31 66"/><path stroke="#fc54b4" d="M199 23L208 25M202 36L214 39M179 43L186 44"/><path stroke="#842454" d="M210 26L217 27M197 29L207 32M212 48L220 50M198 69L206 74"/><path stroke="#84246c" d="M214 22L224 23M203 30L216 33M205 41L213 45M204 42L217 47M177 52L186 55M177 61L184 65M185 61L195 66M198 66L209 71M215 76L221 80M214 81L224 88"/><path stroke="#fc6cb4" d="M190 29L198 29"/><path stroke="#cc3c84" d="M206 26L218 29M193 56L204 63"/><path stroke="#9c246c" d="M216 29L225 31M207 35L214 37M189 49L199 53M185 51L195 54M198 62L205 67"/><path stroke="#3c543c" d="M76 33L81 27M68 43L71 35M75 41L79 32M78 42L80 37M59 44L61 34M79 46L82 41M31 49L34 37M12 54L12 40M-5 53L-4 44M42 57L41 45M52 57L53 45M26 62L27 53M52 63L50 53M59 61L57 52M51 63L51 54M36 70L35 58M18 73L18 65M11 77L9 66"/><path stroke="#546c54" d="M81 35L86 26M68 38L70 32M59 43L61 37M-6 47L-4 34M88 44L90 35M60 46L63 36M81 46L85 39M26 50L28 38M18 57L20 48M24 53L26 41M45 59L45 48M9 64L9 55M28 63L28 50M16 65L17 52M7 70L7 61M24 69L23 62M3 70L1 59"/><path stroke="#24240c" d="M119 32L124 29M102 38L107 34"/><path stroke="#843c54" d="M174 32L185 35"/><path stroke="#fc6ccc" d="M180 35L190 36"/><path stroke="#b42484" d="M214 36L220 38M186 61L197 67M213 63L219 66M210 64L217 67M209 73L215 78"/><path stroke="#849c6c" d="M53 37L56 29"/><path stroke="#9cb484" d="M58 38L60 26M45 45L46 32"/><path stroke="#6c8454" d="M64 37L67 31"/><path stroke="#243c24" d="M73 36L76 30M64 41L66 34M87 41L90 36M92 43L96 36M91 46L94 39M97 50L99 43M52 52L53 45M82 53L83 46M88 51L89 46M5 55L6 48M36 55L39 42M32 58L32 51M37 59L37 51M65 57L66 46M12 63L11 54M43 60L45 46M47 67L45 56"/><path stroke="#e454b4" d="M179 38L190 41M179 43L187 46M176 48L184 50"/><path stroke="#fc3cb4" d="M204 37L216 40M214 36L224 40M214 44L222 47M193 57L201 61M213 57L224 61M215 65L222 68M203 69L210 72"/><path stroke="#849c84" d="M9 43L11 33M70 42L74 35M9 49L12 39M2 52L5 40M4 54L4 43M30 57L31 45M43 53L46 42M-4 58L-2 47M11 58L12 47M22 56L24 48M2 62L3 53M6 67L4 55M4 67L3 57M13 68L11 60"/><path stroke="#cc54b4" d="M171 43L181 47M164 50L171 53"/><path stroke="#e43c9c" d="M196 40L208 43M213 50L225 55M202 53L208 57M205 63L213 66"/><path stroke="#e43cb4" d="M215 43L224 47M182 56L190 60M204 60L214 66M209 61L218 68M213 71L221 78"/><path stroke="#6c846c" d="M52 44L55 33M54 50L54 44M29 50L32 39M12 54L14 41M3 58L1 45M20 60L20 47M-2 63L-3 54M-4 65L-5 55M20 67L21 58M-6 73L-6 61"/><path stroke="#243c3c" d="M73 45L75 39M77 50L77 43M65 53L65 44M78 56L77 48M85 55L86 47M88 63L87 57M96 70L91 65M29 73L27 63M101 70L95 66M7 75L6 67M58 78L55 72M103 74L99 72M25 79L24 70M115 77L111 79M-2 83L-6 72M8 84L7 76M31 82L28 71M55 81L52 70M106 81L101 81M31 85L29 72M65 88L60 81M9 92L4 80M14 89L11 80M43 92L38 83M8 93L5 80M64 96L57 89M57 95L52 90M-3 100L-5 92M15 102L10 92M-2 105L-6 98"/><path stroke="#0c2424" d="M98 47L101 42M93 64L90 56M99 64L96 57M90 66L88 62M104 67L99 64M93 67L89 63M104 69L100 66M107 67L100 65M107 73L100 71M90 75L84 68M107 75L103 75M112 74L105 76M104 79L96 78M111 83L107 85M40 87L37 80M110 88L104 90M108 90L99 92M14 92L10 80M22 98L18 86M-3 103L-6 95M36 101L33 94M4 112L-0 106"/><path stroke="#cc3c9c" d="M194 43L205 47M197 59L208 64M193 63L200 66"/><path stroke="#84b484" d="M61 48L63 41M42 53L43 42M59 51L61 43"/><path stroke="#84b49c" d="M70 46L73 38M50 57L51 44"/><path stroke="#24543c" d="M88 50L90 43M71 56L71 47M90 56L89 50M86 60L85 51M91 59L91 54M95 65L92 59M43 70L42 58M47 72L46 60M52 72L50 62M81 74L78 67M97 74L91 71M39 74L37 63M72 76L70 69M89 81L84 77M70 92L61 84"/><path stroke="#542454" d="M162 49L168 50M155 57L162 61M142 56L147 59M154 63L161 69M163 61L170 66M180 60L190 65M180 67L190 75"/><path stroke="#9c2484" d="M194 50L201 54M185 57L197 64M173 64L179 67M177 70L184 74M211 81L222 90M207 81L216 89"/><path stroke="#6c9c84" d="M47 54L47 41M73 52L73 46M28 71L28 62"/><path stroke="#84cc9c" d="M64 51L66 44M67 54L68 47"/><path stroke="#240c24" d="M142 54L147 56M128 54L135 56M128 68L130 73M140 68L145 76M130 71L131 76"/><path stroke="#9c549c" d="M151 51L160 54"/><path stroke="#3c0c3c" d="M182 51L195 54M210 49L221 54M145 57L151 60M173 53L183 57M163 57L170 60M148 62L154 65M170 64L178 68M193 66L200 69M173 76L183 84M194 82L200 91M195 83L205 92M198 86L206 97M201 85L208 91M199 95L206 107M203 96L211 108"/><path stroke="#6c0c3c" d="M205 53L212 57"/><path stroke="#54846c" d="M57 53L59 47M-5 75L-7 66M1 75L1 68M-2 88L-6 76"/><path stroke="#3c6c54" d="M76 55L77 46M63 60L63 52M69 63L69 55M43 65L41 54M57 63L58 52M80 67L78 58M40 73L39 63M57 71L55 63M22 77L20 65M17 79L14 71M34 84L32 77"/><path stroke="#843c84" d="M159 56L164 59"/><path stroke="#cc3cb4" d="M169 57L177 61M170 60L178 65M173 64L183 69M187 67L193 72M209 77L218 83M207 85L214 91"/><path stroke="#549c6c" d="M57 58L57 50"/><path stroke="#3c5454" d="M70 58L70 48M17 61L17 49M22 65L21 54M33 65L31 54M49 70L48 61M8 73L8 62M15 73L13 61M22 73L21 63M19 76L16 67M28 78L25 69M8 79L8 68M7 84L4 73"/><path stroke="#6ccc9c" d="M72 59L73 51M58 67L56 57"/><path stroke="#3c6c6c" d="M80 59L80 51M88 70L85 65M93 73L90 69M31 80L29 68M42 81L38 69M34 82L30 70M101 83L93 81M19 88L17 80M95 89L87 88M3 92L-0 82M21 92L18 81M-6 99L-9 86"/><path stroke="#24243c" d="M132 57L137 59M119 77L116 80M118 82L113 87M123 89L119 95M120 93L113 100M129 110L124 119"/><path stroke="#54246c" d="M145 59L152 63M142 63L149 68M159 63L164 67M162 67L167 71M131 80L131 88M148 88L150 96M153 87L155 98M160 88L163 98M196 90L204 101M192 95L199 103M211 96L218 105"/><path stroke="#9c3c9c" d="M151 58L158 62"/><path stroke="#6c2484" d="M156 58L165 62M146 73L149 78M159 79L164 85M170 77L176 83M187 81L192 88M149 84L152 91M174 84L179 90M188 84L194 92M175 86L179 93M194 88L199 94M167 91L172 99M202 91L206 98M210 99L217 106"/><path stroke="#6c0c54" d="M210 60L216 64M201 66L209 70M208 71L214 76"/><path stroke="#6cb49c" d="M46 63L47 53"/><path stroke="#549c84" d="M75 63L74 57M66 67L64 59M81 64L78 55M68 70L66 64M35 72L34 63M48 77L45 65M41 83L37 74"/><path stroke="#245454" d="M79 63L78 58M70 67L68 57M54 71L53 64M64 71L61 60M87 68L84 63M79 80L74 73M95 80L87 76M62 82L58 73M93 82L85 77M98 80L91 77M75 88L68 83M97 86L92 85M36 88L33 77M79 89L73 83M29 95L25 87M96 92L90 90M15 97L12 85M20 95L14 84M85 98L76 95M15 104L9 93M24 106L19 97M41 106L36 100M52 105L45 97M86 106L79 104M17 108L10 97M51 108L45 101M69 106L62 102M40 113L35 107M75 112L64 107M79 113L69 109M54 116L45 106M69 127L61 124"/><path stroke="#3c846c" d="M88 64L86 55M54 77L50 65M67 78L63 68M84 81L79 76M85 83L79 77M89 88L85 85"/><path stroke="#240c3c" d="M132 62L137 67M134 68L137 74M127 74L126 81M171 77L176 82M130 81L129 86M136 82L138 90M140 84L140 92M172 88L178 100M129 92L126 99M131 95L128 99M152 95L152 103M157 101L159 108M137 103L135 109M154 104L155 113M208 104L214 115M146 109L144 116M152 108L152 122M142 109L139 117M215 111L220 117M194 116L196 128M151 132L148 143"/><path stroke="#546c6c" d="M29 67L29 59M14 75L12 67M4 85L3 77"/><path stroke="#3c9c84" d="M76 68L73 62M65 73L63 67M78 76L74 69M60 86L57 79M49 91L45 83M55 89L49 78"/><path stroke="#3c2454" d="M136 68L139 71M142 68L148 73M149 65L156 69M136 74L139 82M123 81L121 86M124 86L120 92M152 119L149 132"/><path stroke="#84249c" d="M151 64L158 68M156 64L161 69M165 70L172 77M159 77L165 86"/><path stroke="#54cc9c" d="M72 70L69 62"/><path stroke="#6c249c" d="M145 71L148 77M153 74L158 80M151 77L155 84M166 79L172 88M144 81L146 88M166 84L171 92M166 88L169 97M146 99L144 105M157 98L161 110M174 99L177 106M187 95L195 105M159 106L160 116M170 103L173 116M165 112L166 125M186 116L188 128M175 121L177 129M166 131L165 140M197 129L199 142M208 132L210 142"/><path stroke="#8424b4" d="M153 71L157 74M174 81L179 86M161 85L165 95M146 90L146 98M166 88L171 96M180 88L188 99M191 91L199 102M153 92L157 103M162 93L165 104M188 94L195 104M194 93L199 98M171 95L177 107M196 107L200 113M205 106L212 115M174 124L174 132M180 127L182 140"/><path stroke="#3c0c54" d="M158 67L162 71M158 72L162 78M141 80L142 86M153 85L155 93M167 83L175 92M183 85L188 90M151 85L152 95M160 84L165 91M141 92L139 102M186 88L192 98M175 95L183 106M179 93L183 101M202 92L208 102M166 98L168 109M163 106L165 116M172 108L175 116M176 106L179 115M176 112L177 119M181 111L184 118M185 109L189 120M203 112L210 122M180 115L182 128M186 118L190 131M197 115L200 126M188 120L190 130M164 123L163 137M169 122L169 135M197 126L200 133M182 130L183 137"/><path stroke="#9c3cb4" d="M168 68L174 73"/><path stroke="#6c246c" d="M181 68L189 73M177 75L185 83M203 84L212 92"/><path stroke="#b4249c" d="M193 70L202 76M196 75L205 82"/><path stroke="#cc249c" d="M213 67L223 72M197 71L206 80M203 71L210 76"/><path stroke="#54b49c" d="M69 73L65 65M69 76L64 66M60 81L54 72M62 80L59 72M76 78L73 73"/><path stroke="#246c54" d="M75 73L72 66M85 76L81 70M80 83L77 78"/><path stroke="#3c246c" d="M143 74L147 82M128 78L127 83M137 81L138 90M128 86L126 90M138 89L137 95M135 98L132 103M142 99L141 105M159 107L160 118M145 110L142 122M154 113L153 121M162 123L161 132M154 130L151 139M160 129L156 141M158 130L156 137"/><path stroke="#9c3ccc" d="M155 70L159 76M165 72L171 76M165 74L170 79M169 92L173 104"/><path stroke="#540c54" d="M171 71L178 77M180 73L187 82M189 74L195 80M190 74L201 83M191 78L201 87M212 87L221 96M213 94L223 104"/><path stroke="#6c9c9c" d="M33 77L30 64M-3 85L-5 78M0 86L-3 76"/><path stroke="#548484" d="M46 78L44 69M10 85L8 74M17 82L15 73M25 88L22 76M3 89L1 76M-3 95L-5 85"/><path stroke="#3c8484" d="M62 78L60 70M19 92L16 84M54 92L50 85M61 90L57 83M91 88L83 86M78 99L68 94M58 99L53 91M78 98L70 93M3 104L-0 95M67 106L57 97"/><path stroke="#0c3c24" d="M95 76L89 70"/><path stroke="#542484" d="M136 78L137 82M141 74L144 79M129 89L127 96M149 102L149 109M162 100L165 108M181 98L187 109M201 102L208 111M148 103L148 109M163 103L164 112M192 105L195 114M169 112L171 122M191 111L194 120M182 123L184 134M197 123L199 136M208 125L214 138M168 128L168 140M173 130L172 139M192 129L195 137M204 129L208 141"/><path stroke="#843ccc" d="M149 75L153 79M149 78L154 86M142 94L142 100M147 92L148 101M142 101L140 108M157 114L157 125M157 118L154 132M164 115L165 124"/><path stroke="#b424b4" d="M181 75L191 83M186 76L195 82"/><path stroke="#cc3ccc" d="M194 77L199 83"/><path stroke="#6c8484" d="M1 78L0 68"/><path stroke="#54ccb4" d="M54 79L49 69M75 83L68 75"/><path stroke="#243c54" d="M108 79L100 81M104 88L97 89M113 85L107 87M115 90L109 93M100 92L94 92M-1 99L-3 93M109 95L102 98M111 98L101 101M90 112L79 110M79 117L70 114M84 119L76 117"/><path stroke="#842484" d="M179 77L186 83M214 90L224 99M208 92L215 101"/><path stroke="#9c249c" d="M196 77L207 86M201 82L209 88"/><path stroke="#fc3ccc" d="M216 78L225 86"/><path stroke="#549c9c" d="M24 83L21 74M47 81L44 68M11 87L7 75M23 88L18 77M31 90L27 79"/><path stroke="#246c6c" d="M53 82L49 74M26 92L23 81M47 94L42 86M89 92L80 88M52 96L45 84M69 99L64 93M92 97L83 95M59 104L49 95M62 103L52 94M-0 105L-3 96M30 105L22 95M64 105L58 97M-4 112L-8 100M6 109L3 101M54 111L46 102M68 109L60 105M73 109L62 105M39 116L35 109M55 112L45 104M69 120L59 114M51 121L44 114M67 122L57 116M50 125L41 121M78 123L71 121M47 129L37 121M59 128L49 124M45 130L36 124"/><path stroke="#3cb49c" d="M69 84L64 76M52 87L49 79M68 87L63 81M67 91L59 81M84 91L74 85M74 95L68 91M86 91L81 88M68 99L62 93"/><path stroke="#3c3c6c" d="M123 81L119 85"/><path stroke="#0c3c3c" d="M48 86L46 79M43 95L37 84M34 99L30 90M42 98L39 90M45 97L41 88M98 98L89 97M28 104L23 96M47 106L40 99M33 105L26 94M43 109L35 102M44 109L40 103M57 106L49 100M20 112L16 102M35 113L29 103M71 116L64 111M-5 116L-10 107M24 115L18 108M29 116L24 110M86 118L78 116M20 120L11 110M72 121L63 118M3 123L-4 114M37 129L30 124M25 129L20 124M55 130L44 123"/><path stroke="#3c9c9c" d="M81 89L73 81M73 88L67 80M36 95L33 88M60 91L53 84M82 93L75 87M24 97L21 87M62 96L55 86M77 99L70 95M20 100L16 93M43 98L38 87M79 102L70 97M72 107L67 103M44 109L40 104M74 124L67 122"/><path stroke="#54b4b4" d="M84 88L77 82"/><path stroke="#b43ce4" d="M181 87L186 96M197 91L204 100"/><path stroke="#b43ccc" d="M185 88L192 98"/><path stroke="#24546c" d="M102 91L93 91M5 96L2 86M0 100L-4 91M33 98L27 87M9 109L5 100M31 108L26 103M27 115L22 109M87 114L80 113M20 116L13 106M37 119L31 112M41 123L36 117M48 122L40 113M-5 125L-10 118M37 125L28 115M37 132L28 126"/><path stroke="#242454" d="M119 89L114 93M116 100L107 106M109 103L101 106M120 105L116 109M131 119L123 128M137 118L132 129M115 128L105 133M137 127L133 135M146 129L142 140"/><path stroke="#54249c" d="M137 90L136 98M143 104L141 112M156 113L157 126M140 112L138 122M147 115L144 123M145 120L143 128"/><path stroke="#9c3ce4" d="M176 89L180 97M168 99L170 107M177 106L179 117M183 105L188 115"/><path stroke="#cc3ce4" d="M211 89L216 95"/><path stroke="#3cb4b4" d="M53 93L48 86M53 102L45 95M86 101L77 98M76 102L71 98M62 112L53 106"/><path stroke="#243c6c" d="M110 93L102 95M107 114L97 118M91 119L79 120M114 122L104 127M101 129L89 130M105 130L96 135"/><path stroke="#3c5484" d="M114 94L109 98"/><path stroke="#5454cc" d="M123 94L118 99M119 105L112 112M125 111L119 117M128 123L122 130"/><path stroke="#6c3c9c" d="M134 91L133 97"/><path stroke="#6c24b4" d="M159 92L161 101M154 100L154 112M185 102L189 108M197 104L204 115M194 113L197 120M168 119L168 128M207 116L211 124M159 121L157 130M192 120L197 130M168 131L169 143"/><path stroke="#540c6c" d="M212 93L220 101M180 102L187 114M208 128L213 139"/><path stroke="#3c849c" d="M31 97L27 89M8 101L6 93M31 102L28 95M9 105L4 93M16 102L14 95M11 106L9 99M87 106L81 105M89 105L81 105M78 110L70 107"/><path stroke="#3c84b4" d="M102 99L96 99M103 99L94 101M96 105L87 103M84 129L75 129"/><path stroke="#3c3c84" d="M121 95L116 99M125 107L118 115M140 133L134 146"/><path stroke="#3c2484" d="M127 98L122 106M131 103L127 111M137 115L133 124M142 117L139 124M145 128L142 140"/><path stroke="#3c0c6c" d="M180 99L186 107M202 105L207 115M214 109L218 116M208 115L214 127M214 116L219 126M177 126L178 140M213 133L216 140"/><path stroke="#248484" d="M45 98L40 91M62 101L55 91M73 99L63 93M23 113L17 103M64 108L53 102M17 113L11 101M60 116L51 110M30 121L20 112M62 129L56 127M68 131L60 129"/><path stroke="#3c9ccc" d="M93 102L82 101"/><path stroke="#246c84" d="M94 98L84 97M90 104L80 100M24 106L20 99M11 109L4 99M33 112L26 102M-0 114L-4 103M46 112L40 106M12 122L7 114M64 119L54 115M46 125L40 121M68 122L59 118M28 129L19 120M50 129L39 124M79 128L72 126M5 133L1 126"/><path stroke="#5484cc" d="M109 101L102 105"/><path stroke="#3c3c9c" d="M122 101L116 107M116 109L110 113M127 112L122 118M114 116L105 121M144 127L138 138"/><path stroke="#6c3ccc" d="M127 100L123 106M143 108L140 120M142 120L140 128M156 125L153 136"/><path stroke="#6c54e4" d="M130 100L126 110"/><path stroke="#240c54" d="M137 100L136 106"/><path stroke="#9c24e4" d="M175 100L177 108M213 102L218 113M213 103L218 109M209 111L215 121M177 115L179 127M201 115L206 125M205 120L209 128M185 124L187 131M196 124L200 135M192 129L196 141"/><path stroke="#8424cc" d="M188 102L192 112M184 107L188 118M192 109L196 117M195 109L200 120M168 115L168 127M195 116L199 123M177 118L179 130M169 122L169 133M163 128L161 137M214 126L217 136"/><path stroke="#b43cfc" d="M193 102L196 109M209 108L216 115M203 117L208 126M216 125L219 132"/><path stroke="#9c24cc" d="M200 100L207 111"/><path stroke="#0c243c" d="M95 104L85 103M79 109L71 106M108 110L102 112M-4 113L-9 106M5 114L0 102M-1 118L-5 109M5 116L2 109M122 118L113 124M-2 123L-7 111M11 132L2 122M74 130L65 128"/><path stroke="#3c84cc" d="M101 104L90 105M95 115L83 116M93 119L80 119M95 120L84 122M93 125L82 127"/><path stroke="#243c84" d="M114 104L109 108M106 115L97 118M108 127L98 131"/><path stroke="#543cb4" d="M124 103L120 109M138 109L134 120M149 126L145 136"/><path stroke="#3c6c9c" d="M103 106L93 106M91 113L81 113"/><path stroke="#3c6ce4" d="M108 107L100 108M113 112L107 114M109 124L101 129M98 130L86 132"/><path stroke="#3c54cc" d="M115 107L107 113M118 112L108 117M109 121L97 127M119 123L108 130M110 131L101 135M118 130L111 134M130 131L121 140"/><path stroke="#543c9c" d="M128 105L123 114M146 120L141 129M144 125L140 136"/><path stroke="#3c9cb4" d="M56 112L49 106M85 112L74 109M53 114L47 110M56 124L45 118M65 126L54 120"/><path stroke="#246c9c" d="M95 112L85 112"/><path stroke="#3c549c" d="M104 108L93 111"/><path stroke="#6c3ce4" d="M137 110L132 120"/><path stroke="#843ce4" d="M155 112L155 122M162 115L163 122M153 123L152 136"/><path stroke="#0c3c54" d="M12 113L7 106M78 121L67 118M8 124L-0 114M15 126L7 115M40 123L31 114M96 126L83 126M3 127L-1 121M8 127L4 122M14 128L7 121M40 128L31 121M-6 132L-12 125M32 134L25 128M81 129L72 128"/><path stroke="#0c5454" d="M26 113L21 105M43 117L32 108M44 115L36 107M9 122L4 113M34 121L29 113M55 123L46 118M30 126L21 117M52 131L42 124"/><path stroke="#3c6ccc" d="M103 113L93 115M98 116L85 120M103 126L96 128"/><path stroke="#3c54e4" d="M117 112L110 117M126 130L117 138"/><path stroke="#5454e4" d="M129 113L122 122M124 123L118 127M130 123L124 132M137 127L131 137"/><path stroke="#24849c" d="M11 115L6 106M74 117L64 112M3 123L-1 115M23 122L14 114M19 124L13 117M22 125L16 116M-4 126L-10 118M20 126L14 119M74 130L61 126M4 131L-2 124M19 130L14 126M62 132L50 128"/><path stroke="#249c9c" d="M64 115L56 110"/><path stroke="#24549c" d="M102 119L92 123M103 122L95 125"/><path stroke="#24246c" d="M118 119L114 123M127 122L120 132"/><path stroke="#6c3cb4" d="M153 119L152 132"/><path stroke="#9c3cfc" d="M181 119L182 128M212 119L216 128M208 120L210 127M215 121L219 129M179 123L180 136M192 124L193 133M205 123L209 134M185 134L185 145"/><path stroke="#243c9c" d="M120 122L115 127"/><path stroke="#3c3cb4" d="M134 119L128 126M132 129L125 140M135 130L129 135"/><path stroke="#246cb4" d="M88 125L80 124"/><path stroke="#0c2454" d="M116 127L106 132M118 126L111 132M99 133L86 138M113 134L106 137"/><path stroke="#0c546c" d="M25 129L20 123"/><path stroke="#245484" d="M87 126L75 125M91 131L83 132"/><path stroke="#3c6cb4" d="M93 128L80 130"/><path stroke="#8424e4" d="M187 127L190 137M205 130L210 142"/><path stroke="#249cb4" d="M42 133L34 125"/><path stroke="#3c54fc" d="M127 131L120 139"/></g></svg></div>
<div class="cap" style="left:740px;top:1242px;letter-spacing:0.80px">Drift</div>
</div>
</div>
</body>
</html>
